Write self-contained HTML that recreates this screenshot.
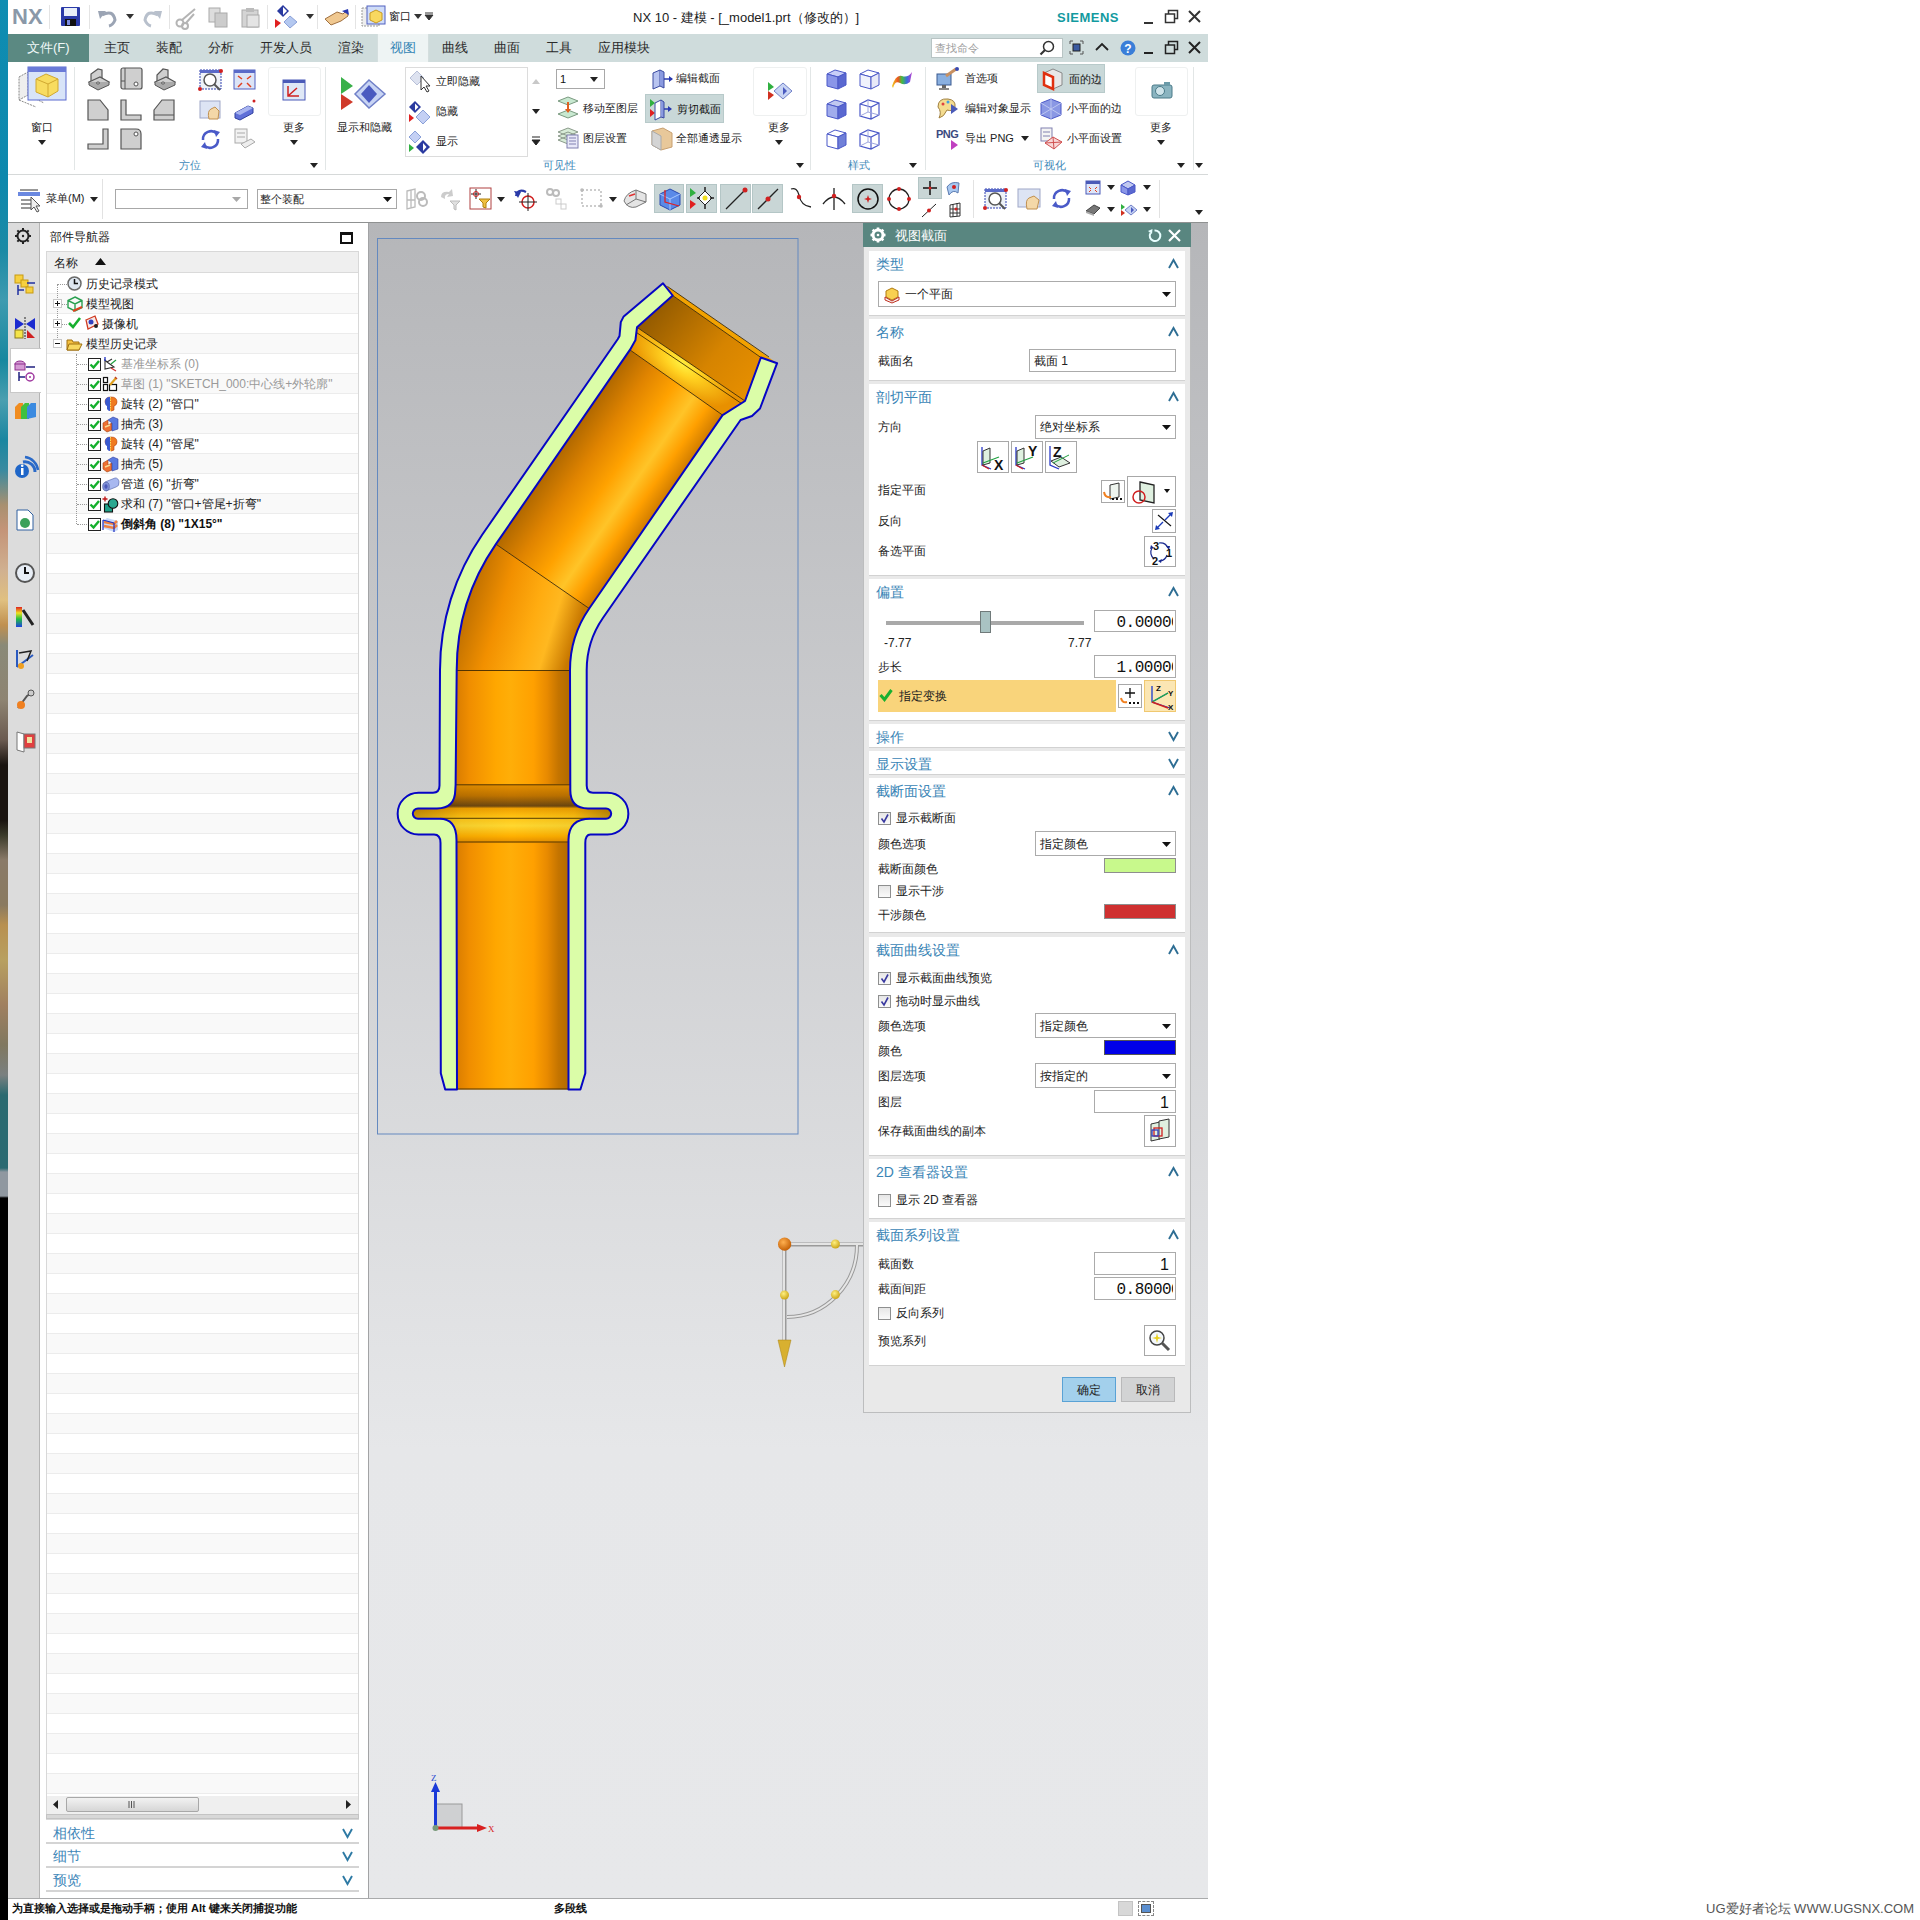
<!DOCTYPE html>
<html><head><meta charset="utf-8"><title>NX 10</title>
<style>
*{margin:0;padding:0;box-sizing:border-box}
html,body{width:1920px;height:1920px;overflow:hidden;background:#fff}
body{position:relative;font-family:"Liberation Sans",sans-serif;font-size:12px;color:#1e1e1e;line-height:1}
.a{position:absolute;white-space:nowrap}
.c{font-size:1.22em;letter-spacing:.07em}
svg.a{overflow:visible}
</style></head><body>

<div class="a" style="left:0px;top:0px;width:8px;height:1920px;background:linear-gradient(#0f8db2 0px,#0d88ad 180px,#1b8aa5 250px,#3f9bb0 300px,#17889f 360px,#4a9fb0 400px,#1a86a0 440px,#3a8aa0 470px,#a89070 505px,#c49478 530px,#d0b090 570px,#e0c080 600px,#c09050 625px,#8a8a78 645px,#8e8472 700px,#6a5a50 740px,#1a1410 765px,#1a1410 820px,#3a3a2a 835px,#8a7a68 860px,#8a7a60 905px,#b89050 925px,#b8a060 960px,#a08060 1005px,#807860 1045px,#7a8080 1075px,#2a6a70 1095px,#2a6a72 1168px,#9098a0 1172px,#9098a0 1196px,#000 1198px,#000 1920px)"></div>
<div class="a" style="left:8px;top:0px;width:1200px;height:34px;background:#fff"></div>
<div class="a" style="left:8px;top:34px;width:1200px;height:28px;background:#cfdcdc"></div>
<div class="a" style="left:8px;top:62px;width:1200px;height:112px;background:#fff"></div>
<div class="a" style="left:8px;top:174px;width:1200px;height:1px;background:#d6d9d9"></div>
<div class="a" style="left:8px;top:175px;width:1200px;height:47px;background:#fff"></div>
<div class="a" style="left:8px;top:222px;width:1200px;height:1px;background:#8f9191"></div>
<div class="a" style="left:8px;top:223px;width:32px;height:1675px;background:#dcdcdc;border-right:1px solid #b4b4b4"></div>
<div class="a" style="left:41px;top:223px;width:327px;height:1675px;background:#fff"></div>
<div class="a" style="left:368px;top:223px;width:840px;height:1675px;background:linear-gradient(#b5b6b9 0px,#e6e7e9 1227px,#e7e8ea 1675px);border-left:1px solid #a2a3a5"></div>
<div class="a" style="left:8px;top:1898px;width:1200px;height:1px;background:#a9aaab"></div>
<div class="a" style="left:8px;top:1899px;width:1200px;height:21px;background:#fff"></div>
<div class="a" style="left:12px;top:1902.5px;font-size:11px;color:#111;font-weight:bold"><span class="c">为直接输入选择或是拖动手柄；使用</span> Alt <span class="c">键来关闭捕捉功能</span></div>
<div class="a" style="left:554px;top:1902.5px;font-size:11px;color:#111;font-weight:bold"><span class="c">多段线</span></div>
<div class="a" style="left:1118px;top:1901px;width:15px;height:15px;background:#d8d8d8;border:1px solid #c4c4c4"></div>
<div class="a" style="left:1138px;top:1901px;width:16px;height:15px;border:1px dashed #888"></div>
<div class="a" style="left:1141px;top:1904px;width:10px;height:9px;background:#5b8fd0;border:1px solid #555"></div>
<div class="a" style="left:1706px;top:1901.5px;font-size:13px;color:#555;font-family:"Liberation Mono",monospace;letter-spacing:-0.5px">UG<span class="c">爱好者论坛</span> WWW.UGSNX.COM</div>
<div class="a" style="left:10px;top:348px;width:31px;height:45px;background:#fff;border:1px solid #c8c8c8;border-right:none"></div>
<svg class="a" style="left:14px;top:227px;" width="18" height="18" viewBox="0 0 18 18"><circle cx="9" cy="9" r="5.5" fill="none" stroke="#222" stroke-width="2"/><circle cx="9" cy="9" r="1.2" fill="#222"/><rect x="8" y="1" width="2" height="3" fill="#222" transform="rotate(0 9 9)"/><rect x="8" y="1" width="2" height="3" fill="#222" transform="rotate(45 9 9)"/><rect x="8" y="1" width="2" height="3" fill="#222" transform="rotate(90 9 9)"/><rect x="8" y="1" width="2" height="3" fill="#222" transform="rotate(135 9 9)"/><rect x="8" y="1" width="2" height="3" fill="#222" transform="rotate(180 9 9)"/><rect x="8" y="1" width="2" height="3" fill="#222" transform="rotate(225 9 9)"/><rect x="8" y="1" width="2" height="3" fill="#222" transform="rotate(270 9 9)"/><rect x="8" y="1" width="2" height="3" fill="#222" transform="rotate(315 9 9)"/></svg>
<svg width="0" height="0" style="position:absolute"><defs><linearGradient id="rb" x1="0" y1="0" x2="0" y2="1"><stop offset="0" stop-color="#e02020"/><stop offset="0.3" stop-color="#f0e020"/><stop offset="0.6" stop-color="#20c040"/><stop offset="1" stop-color="#2040e0"/></linearGradient></defs></svg>
<svg class="a" style="left:13px;top:273px;" width="24" height="24" viewBox="0 0 24 24"><rect x="2" y="2" width="8" height="8" fill="#f6d040" stroke="#c89a10"/><rect x="8" y="7" width="7" height="7" fill="#f6d040" stroke="#c89a10"/><rect x="13" y="14" width="7" height="6" fill="#f6d040" stroke="#c89a10"/><path d="M5 12 V22 M5 17 H11 M14 10 H22" stroke="#2030a0" stroke-width="1.5"/></svg>
<svg class="a" style="left:13px;top:315px;" width="24" height="24" viewBox="0 0 24 24"><path d="M2 3 L11 9 L2 15 Z M22 3 L13 9 L22 15 Z" fill="#1b2bd0"/><rect x="2" y="15" width="8" height="8" fill="#f4e44a" stroke="#8a7a20"/><path d="M14 23 L22 23 L14 15 Z" fill="#d02020"/><path d="M12 2 V24" stroke="#222" stroke-dasharray="2 1"/></svg>
<svg class="a" style="left:13px;top:359px;" width="24" height="24" viewBox="0 0 24 24"><ellipse cx="7" cy="5" rx="5" ry="3" fill="#d49ad4" stroke="#903090"/><rect x="2" y="5" width="10" height="6" fill="#d49ad4" stroke="#903090"/><path d="M6 13 V22 M6 18 H12 M13 8 H22" stroke="#202080" stroke-width="1.5"/><circle cx="17" cy="18" r="4" fill="none" stroke="#a03aa0" stroke-width="1.5"/><circle cx="17" cy="18" r="1" fill="#a03aa0"/></svg>
<svg class="a" style="left:13px;top:399px;" width="24" height="24" viewBox="0 0 24 24"><path d="M2 8 L6 4 L10 4 L10 20 L2 20 Z" fill="#f08c20"/><path d="M8 8 L12 4 L16 4 L16 20 L8 20 Z" fill="#40c040"/><path d="M14 8 L18 4 L23 4 L23 18 L14 20 Z" fill="#3a8ae0"/></svg>
<svg class="a" style="left:13px;top:454px;" width="24" height="24" viewBox="0 0 24 24"><path d="M10 8 A10 10 0 0 1 22 18" stroke="#2a6ac8" stroke-width="3" fill="none"/><path d="M12 3 A15 15 0 0 1 25 16" stroke="#2a6ac8" stroke-width="2.5" fill="none"/><circle cx="9" cy="17" r="7" fill="#1f66c8"/><rect x="8" y="14" width="2.5" height="7" fill="#fff"/><circle cx="9.2" cy="11.8" r="1.3" fill="#fff"/></svg>
<svg class="a" style="left:13px;top:508px;" width="24" height="24" viewBox="0 0 24 24"><path d="M4 2 H15 L20 7 V22 H4 Z" fill="#fff" stroke="#3060a0"/><circle cx="12" cy="15" r="5" fill="#3aa05a"/></svg>
<svg class="a" style="left:13px;top:561px;" width="24" height="24" viewBox="0 0 24 24"><circle cx="12" cy="12" r="9" fill="#e8eef6" stroke="#555" stroke-width="2"/><path d="M12 6 V12 H16" stroke="#111" stroke-width="2" fill="none"/></svg>
<svg class="a" style="left:13px;top:605px;" width="24" height="24" viewBox="0 0 24 24"><rect x="3" y="2" width="6" height="20" fill="url(#rb)"/><path d="M10 5 L20 20" stroke="#222" stroke-width="3"/></svg>
<svg class="a" style="left:13px;top:647px;" width="24" height="24" viewBox="0 0 24 24"><path d="M4 3 V20 M4 20 L20 8" stroke="#2a5ac0" stroke-width="2"/><path d="M6 6 L18 4 L14 14" fill="none" stroke="#222" stroke-width="1.5"/><circle cx="8" cy="19" r="3" fill="#f0a020"/></svg>
<svg class="a" style="left:13px;top:688px;" width="24" height="24" viewBox="0 0 24 24"><path d="M5 20 L14 8 L20 4" stroke="#555" stroke-width="2" fill="none"/><circle cx="18" cy="5" r="3" fill="#ccc" stroke="#555"/><circle cx="8" cy="17" r="4" fill="#f08020"/></svg>
<svg class="a" style="left:13px;top:729px;" width="24" height="24" viewBox="0 0 24 24"><path d="M4 3 V21 L11 23 V5 Z" fill="#fff" stroke="#777"/><rect x="11" y="5" width="11" height="14" fill="#e04040" stroke="#777"/><rect x="14" y="8" width="5" height="6" fill="#f0e0a0"/></svg>
<div class="a" style="left:50px;top:231.0px;font-size:12px;color:#222;"><span class="c">部件导航器</span></div>
<div class="a" style="left:340px;top:232px;width:13px;height:12px;border:2px solid #111;border-top-width:3px"></div>
<div class="a" style="left:46px;top:251px;width:313px;height:1569px;border:1px solid #d8d8d8;background:#fff"></div>
<div class="a" style="left:47px;top:252px;width:311px;height:21px;background:#efefef;border-bottom:1px solid #dadada"></div>
<div class="a" style="left:54px;top:257.0px;font-size:12px;color:#222;"><span class="c">名称</span></div>
<svg class="a" style="left:95px;top:258px;" width="11" height="7" viewBox="0 0 11 7"><path d="M0 7 L5.5 0 L11 7 Z" fill="#111"/></svg>
<div class="a" style="left:47px;top:274px;width:311px;height:20px;background:#ffffff;border-bottom:1px solid #ececec"></div>
<div class="a" style="left:47px;top:294px;width:311px;height:20px;background:#f9f9f9;border-bottom:1px solid #ececec"></div>
<div class="a" style="left:47px;top:314px;width:311px;height:20px;background:#ffffff;border-bottom:1px solid #ececec"></div>
<div class="a" style="left:47px;top:334px;width:311px;height:20px;background:#f9f9f9;border-bottom:1px solid #ececec"></div>
<div class="a" style="left:47px;top:354px;width:311px;height:20px;background:#ffffff;border-bottom:1px solid #ececec"></div>
<div class="a" style="left:47px;top:374px;width:311px;height:20px;background:#f9f9f9;border-bottom:1px solid #ececec"></div>
<div class="a" style="left:47px;top:394px;width:311px;height:20px;background:#ffffff;border-bottom:1px solid #ececec"></div>
<div class="a" style="left:47px;top:414px;width:311px;height:20px;background:#f9f9f9;border-bottom:1px solid #ececec"></div>
<div class="a" style="left:47px;top:434px;width:311px;height:20px;background:#ffffff;border-bottom:1px solid #ececec"></div>
<div class="a" style="left:47px;top:454px;width:311px;height:20px;background:#f9f9f9;border-bottom:1px solid #ececec"></div>
<div class="a" style="left:47px;top:474px;width:311px;height:20px;background:#ffffff;border-bottom:1px solid #ececec"></div>
<div class="a" style="left:47px;top:494px;width:311px;height:20px;background:#f9f9f9;border-bottom:1px solid #ececec"></div>
<div class="a" style="left:47px;top:514px;width:311px;height:20px;background:#ffffff;border-bottom:1px solid #ececec"></div>
<div class="a" style="left:47px;top:534px;width:311px;height:20px;background:#f9f9f9;border-bottom:1px solid #ececec"></div>
<div class="a" style="left:47px;top:554px;width:311px;height:20px;background:#ffffff;border-bottom:1px solid #ececec"></div>
<div class="a" style="left:47px;top:574px;width:311px;height:20px;background:#f9f9f9;border-bottom:1px solid #ececec"></div>
<div class="a" style="left:47px;top:594px;width:311px;height:20px;background:#ffffff;border-bottom:1px solid #ececec"></div>
<div class="a" style="left:47px;top:614px;width:311px;height:20px;background:#f9f9f9;border-bottom:1px solid #ececec"></div>
<div class="a" style="left:47px;top:634px;width:311px;height:20px;background:#ffffff;border-bottom:1px solid #ececec"></div>
<div class="a" style="left:47px;top:654px;width:311px;height:20px;background:#f9f9f9;border-bottom:1px solid #ececec"></div>
<div class="a" style="left:47px;top:674px;width:311px;height:20px;background:#ffffff;border-bottom:1px solid #ececec"></div>
<div class="a" style="left:47px;top:694px;width:311px;height:20px;background:#f9f9f9;border-bottom:1px solid #ececec"></div>
<div class="a" style="left:47px;top:714px;width:311px;height:20px;background:#ffffff;border-bottom:1px solid #ececec"></div>
<div class="a" style="left:47px;top:734px;width:311px;height:20px;background:#f9f9f9;border-bottom:1px solid #ececec"></div>
<div class="a" style="left:47px;top:754px;width:311px;height:20px;background:#ffffff;border-bottom:1px solid #ececec"></div>
<div class="a" style="left:47px;top:774px;width:311px;height:20px;background:#f9f9f9;border-bottom:1px solid #ececec"></div>
<div class="a" style="left:47px;top:794px;width:311px;height:20px;background:#ffffff;border-bottom:1px solid #ececec"></div>
<div class="a" style="left:47px;top:814px;width:311px;height:20px;background:#f9f9f9;border-bottom:1px solid #ececec"></div>
<div class="a" style="left:47px;top:834px;width:311px;height:20px;background:#ffffff;border-bottom:1px solid #ececec"></div>
<div class="a" style="left:47px;top:854px;width:311px;height:20px;background:#f9f9f9;border-bottom:1px solid #ececec"></div>
<div class="a" style="left:47px;top:874px;width:311px;height:20px;background:#ffffff;border-bottom:1px solid #ececec"></div>
<div class="a" style="left:47px;top:894px;width:311px;height:20px;background:#f9f9f9;border-bottom:1px solid #ececec"></div>
<div class="a" style="left:47px;top:914px;width:311px;height:20px;background:#ffffff;border-bottom:1px solid #ececec"></div>
<div class="a" style="left:47px;top:934px;width:311px;height:20px;background:#f9f9f9;border-bottom:1px solid #ececec"></div>
<div class="a" style="left:47px;top:954px;width:311px;height:20px;background:#ffffff;border-bottom:1px solid #ececec"></div>
<div class="a" style="left:47px;top:974px;width:311px;height:20px;background:#f9f9f9;border-bottom:1px solid #ececec"></div>
<div class="a" style="left:47px;top:994px;width:311px;height:20px;background:#ffffff;border-bottom:1px solid #ececec"></div>
<div class="a" style="left:47px;top:1014px;width:311px;height:20px;background:#f9f9f9;border-bottom:1px solid #ececec"></div>
<div class="a" style="left:47px;top:1034px;width:311px;height:20px;background:#ffffff;border-bottom:1px solid #ececec"></div>
<div class="a" style="left:47px;top:1054px;width:311px;height:20px;background:#f9f9f9;border-bottom:1px solid #ececec"></div>
<div class="a" style="left:47px;top:1074px;width:311px;height:20px;background:#ffffff;border-bottom:1px solid #ececec"></div>
<div class="a" style="left:47px;top:1094px;width:311px;height:20px;background:#f9f9f9;border-bottom:1px solid #ececec"></div>
<div class="a" style="left:47px;top:1114px;width:311px;height:20px;background:#ffffff;border-bottom:1px solid #ececec"></div>
<div class="a" style="left:47px;top:1134px;width:311px;height:20px;background:#f9f9f9;border-bottom:1px solid #ececec"></div>
<div class="a" style="left:47px;top:1154px;width:311px;height:20px;background:#ffffff;border-bottom:1px solid #ececec"></div>
<div class="a" style="left:47px;top:1174px;width:311px;height:20px;background:#f9f9f9;border-bottom:1px solid #ececec"></div>
<div class="a" style="left:47px;top:1194px;width:311px;height:20px;background:#ffffff;border-bottom:1px solid #ececec"></div>
<div class="a" style="left:47px;top:1214px;width:311px;height:20px;background:#f9f9f9;border-bottom:1px solid #ececec"></div>
<div class="a" style="left:47px;top:1234px;width:311px;height:20px;background:#ffffff;border-bottom:1px solid #ececec"></div>
<div class="a" style="left:47px;top:1254px;width:311px;height:20px;background:#f9f9f9;border-bottom:1px solid #ececec"></div>
<div class="a" style="left:47px;top:1274px;width:311px;height:20px;background:#ffffff;border-bottom:1px solid #ececec"></div>
<div class="a" style="left:47px;top:1294px;width:311px;height:20px;background:#f9f9f9;border-bottom:1px solid #ececec"></div>
<div class="a" style="left:47px;top:1314px;width:311px;height:20px;background:#ffffff;border-bottom:1px solid #ececec"></div>
<div class="a" style="left:47px;top:1334px;width:311px;height:20px;background:#f9f9f9;border-bottom:1px solid #ececec"></div>
<div class="a" style="left:47px;top:1354px;width:311px;height:20px;background:#ffffff;border-bottom:1px solid #ececec"></div>
<div class="a" style="left:47px;top:1374px;width:311px;height:20px;background:#f9f9f9;border-bottom:1px solid #ececec"></div>
<div class="a" style="left:47px;top:1394px;width:311px;height:20px;background:#ffffff;border-bottom:1px solid #ececec"></div>
<div class="a" style="left:47px;top:1414px;width:311px;height:20px;background:#f9f9f9;border-bottom:1px solid #ececec"></div>
<div class="a" style="left:47px;top:1434px;width:311px;height:20px;background:#ffffff;border-bottom:1px solid #ececec"></div>
<div class="a" style="left:47px;top:1454px;width:311px;height:20px;background:#f9f9f9;border-bottom:1px solid #ececec"></div>
<div class="a" style="left:47px;top:1474px;width:311px;height:20px;background:#ffffff;border-bottom:1px solid #ececec"></div>
<div class="a" style="left:47px;top:1494px;width:311px;height:20px;background:#f9f9f9;border-bottom:1px solid #ececec"></div>
<div class="a" style="left:47px;top:1514px;width:311px;height:20px;background:#ffffff;border-bottom:1px solid #ececec"></div>
<div class="a" style="left:47px;top:1534px;width:311px;height:20px;background:#f9f9f9;border-bottom:1px solid #ececec"></div>
<div class="a" style="left:47px;top:1554px;width:311px;height:20px;background:#ffffff;border-bottom:1px solid #ececec"></div>
<div class="a" style="left:47px;top:1574px;width:311px;height:20px;background:#f9f9f9;border-bottom:1px solid #ececec"></div>
<div class="a" style="left:47px;top:1594px;width:311px;height:20px;background:#ffffff;border-bottom:1px solid #ececec"></div>
<div class="a" style="left:47px;top:1614px;width:311px;height:20px;background:#f9f9f9;border-bottom:1px solid #ececec"></div>
<div class="a" style="left:47px;top:1634px;width:311px;height:20px;background:#ffffff;border-bottom:1px solid #ececec"></div>
<div class="a" style="left:47px;top:1654px;width:311px;height:20px;background:#f9f9f9;border-bottom:1px solid #ececec"></div>
<div class="a" style="left:47px;top:1674px;width:311px;height:20px;background:#ffffff;border-bottom:1px solid #ececec"></div>
<div class="a" style="left:47px;top:1694px;width:311px;height:20px;background:#f9f9f9;border-bottom:1px solid #ececec"></div>
<div class="a" style="left:47px;top:1714px;width:311px;height:20px;background:#ffffff;border-bottom:1px solid #ececec"></div>
<div class="a" style="left:47px;top:1734px;width:311px;height:20px;background:#f9f9f9;border-bottom:1px solid #ececec"></div>
<div class="a" style="left:47px;top:1754px;width:311px;height:20px;background:#ffffff;border-bottom:1px solid #ececec"></div>
<div class="a" style="left:47px;top:1774px;width:311px;height:20px;background:#f9f9f9;border-bottom:1px solid #ececec"></div>
<div class="a" style="left:57px;top:284px;width:1px;height:60px;border-left:1px dotted #999"></div>
<div class="a" style="left:58px;top:284px;width:9px;height:1px;border-top:1px dotted #999"></div>
<div class="a" style="left:62px;top:304px;width:5px;height:1px;border-top:1px dotted #999"></div>
<div class="a" style="left:62px;top:324px;width:5px;height:1px;border-top:1px dotted #999"></div>
<div class="a" style="left:76px;top:354px;width:1px;height:170px;border-left:1px dotted #999"></div>
<div class="a" style="left:77px;top:364px;width:10px;height:1px;border-top:1px dotted #999"></div>
<div class="a" style="left:77px;top:384px;width:10px;height:1px;border-top:1px dotted #999"></div>
<div class="a" style="left:77px;top:404px;width:10px;height:1px;border-top:1px dotted #999"></div>
<div class="a" style="left:77px;top:424px;width:10px;height:1px;border-top:1px dotted #999"></div>
<div class="a" style="left:77px;top:444px;width:10px;height:1px;border-top:1px dotted #999"></div>
<div class="a" style="left:77px;top:464px;width:10px;height:1px;border-top:1px dotted #999"></div>
<div class="a" style="left:77px;top:484px;width:10px;height:1px;border-top:1px dotted #999"></div>
<div class="a" style="left:77px;top:504px;width:10px;height:1px;border-top:1px dotted #999"></div>
<div class="a" style="left:77px;top:524px;width:10px;height:1px;border-top:1px dotted #999"></div>
<div class="a" style="left:53px;top:299px;width:9px;height:9px;border:1px solid #c8c8c8;background:#fff"></div>
<div class="a" style="left:55px;top:303px;width:5px;height:1px;background:#111"></div>
<div class="a" style="left:57px;top:301px;width:1px;height:5px;background:#111"></div>
<div class="a" style="left:53px;top:319px;width:9px;height:9px;border:1px solid #c8c8c8;background:#fff"></div>
<div class="a" style="left:55px;top:323px;width:5px;height:1px;background:#111"></div>
<div class="a" style="left:57px;top:321px;width:1px;height:5px;background:#111"></div>
<div class="a" style="left:53px;top:339px;width:9px;height:9px;border:1px solid #c8c8c8;background:#fff"></div>
<div class="a" style="left:55px;top:343px;width:5px;height:1px;background:#111"></div>
<svg class="a" style="left:67px;top:276px;" width="15" height="15" viewBox="0 0 15 15"><circle cx="7.5" cy="7.5" r="6.5" fill="#dde6f0" stroke="#6a6a6a" stroke-width="1.5"/><path d="M7.5 3 V7.5 H11" stroke="#111" stroke-width="1.5" fill="none"/></svg>
<div class="a" style="left:86px;top:278.0px;font-size:12px;color:#222;"><span class="c">历史记录模式</span></div>
<svg class="a" style="left:67px;top:296px;" width="16" height="16" viewBox="0 0 16 16"><path d="M8 1 L15 4.5 V11.5 L8 15 L1 11.5 V4.5 Z M1 4.5 L8 8 L15 4.5 M8 8 V15" fill="none" stroke="#2aa050" stroke-width="1.4"/><path d="M6 15 L15 11" stroke="#e04020" stroke-width="2"/></svg>
<div class="a" style="left:86px;top:298.0px;font-size:12px;color:#222;"><span class="c">模型视图</span></div>
<svg class="a" style="left:68px;top:317px;" width="13" height="12" viewBox="0 0 13 12"><path d="M1 6 L5 10 L12 1" fill="none" stroke="#18b030" stroke-width="2.6"/></svg>
<svg class="a" style="left:84px;top:315px;" width="15" height="15" viewBox="0 0 15 15"><path d="M2 5 L11 1 L14 9 L4 14 Z" fill="#f6e8e8" stroke="#d03a20" stroke-width="1.3"/><circle cx="7" cy="7" r="2.5" fill="#3040c0"/><circle cx="12" cy="11" r="2" fill="#222"/></svg>
<div class="a" style="left:102px;top:318.0px;font-size:12px;color:#222;"><span class="c">摄像机</span></div>
<svg class="a" style="left:66px;top:337px;" width="17" height="14" viewBox="0 0 17 14"><path d="M1 3 H6 L7 5 H13 V13 H1 Z" fill="#f4c040" stroke="#a07010"/><path d="M3 7 H16 L13 13 H1 Z" fill="#f8d860" stroke="#a07010"/></svg>
<div class="a" style="left:86px;top:338.0px;font-size:12px;color:#222;"><span class="c">模型历史记录</span></div>
<div class="a" style="left:88px;top:358px;width:13px;height:13px;border:1px solid #222;background:#fff"></div>
<svg class="a" style="left:89px;top:359px;" width="11" height="11" viewBox="0 0 11 11"><path d="M1.5 5.5 L4.5 8.5 L10 2" fill="none" stroke="#14b02c" stroke-width="2.4"/></svg>
<svg class="a" style="left:102px;top:356px;" width="16" height="16" viewBox="0 0 16 16"><path d="M3 4 V13 L12 11 L5 6 Z M5 6 L10 3" fill="none" stroke="#333" stroke-width="1.1"/><path d="M3 5 V1" stroke="#2030c0" stroke-width="1.3"/><path d="M9 8 L14 4" stroke="#20a040" stroke-width="1.3"/><path d="M9 12 L14 15" stroke="#d03030" stroke-width="1.3"/></svg>
<div class="a" style="left:121px;top:358.0px;font-size:12px;color:#9a9a9a;"><span class="c">基准坐标系</span> (0)</div>
<div class="a" style="left:88px;top:378px;width:13px;height:13px;border:1px solid #222;background:#fff"></div>
<svg class="a" style="left:89px;top:379px;" width="11" height="11" viewBox="0 0 11 11"><path d="M1.5 5.5 L4.5 8.5 L10 2" fill="none" stroke="#14b02c" stroke-width="2.4"/></svg>
<svg class="a" style="left:102px;top:376px;" width="16" height="16" viewBox="0 0 16 16"><rect x="1.5" y="1.5" width="4" height="5" fill="#fff" stroke="#111" stroke-width="1.2"/><rect x="1.5" y="8.5" width="4" height="6" fill="#fff" stroke="#111" stroke-width="1.2"/><rect x="7.5" y="8.5" width="7" height="6" fill="#fff" stroke="#111" stroke-width="1.2"/><path d="M8 9 L14 2" stroke="#e0a020" stroke-width="2.2"/><path d="M13 1 L15 3" stroke="#c04020" stroke-width="1.5"/></svg>
<div class="a" style="left:121px;top:378.0px;font-size:12px;color:#9a9a9a;"><span class="c">草图</span> (1) "SKETCH_000:<span class="c">中心线</span>+<span class="c">外轮廓</span>"</div>
<div class="a" style="left:88px;top:398px;width:13px;height:13px;border:1px solid #222;background:#fff"></div>
<svg class="a" style="left:89px;top:399px;" width="11" height="11" viewBox="0 0 11 11"><path d="M1.5 5.5 L4.5 8.5 L10 2" fill="none" stroke="#14b02c" stroke-width="2.4"/></svg>
<svg class="a" style="left:102px;top:396px;" width="16" height="16" viewBox="0 0 16 16"><path d="M3 6 Q3 1 9 1 Q15 1 15 6 Q15 9 12 10 V14 Q9 16 7 14 V10 Q3 9 3 6 Z" fill="#f07a20" stroke="#b04010" stroke-width="0.6"/><path d="M3 6 Q3 1 8 1 V15 Q6 15 5 13 V10 Q3 9 3 6 Z" fill="#3a5ad0"/><path d="M8.5 1 V15" stroke="#f8e060" stroke-width="1" stroke-dasharray="1.5 1"/></svg>
<div class="a" style="left:121px;top:398.0px;font-size:12px;color:#222;"><span class="c">旋转</span> (2) "<span class="c">管口</span>"</div>
<div class="a" style="left:88px;top:418px;width:13px;height:13px;border:1px solid #222;background:#fff"></div>
<svg class="a" style="left:89px;top:419px;" width="11" height="11" viewBox="0 0 11 11"><path d="M1.5 5.5 L4.5 8.5 L10 2" fill="none" stroke="#14b02c" stroke-width="2.4"/></svg>
<svg class="a" style="left:102px;top:416px;" width="16" height="16" viewBox="0 0 16 16"><path d="M1 7 L6 4 V9 L10 7 V14 L5 16 L1 13 Z" fill="#f07030" stroke="#a04010" stroke-width="0.6"/><path d="M6 4 L11 1 L16 3 V13 L10 15 V7 Z" fill="#5a7ae0" stroke="#3040a0" stroke-width="0.6"/><path d="M3 11 L8 9" stroke="#f8d890" stroke-width="1.5"/></svg>
<div class="a" style="left:121px;top:418.0px;font-size:12px;color:#222;"><span class="c">抽壳</span> (3)</div>
<div class="a" style="left:88px;top:438px;width:13px;height:13px;border:1px solid #222;background:#fff"></div>
<svg class="a" style="left:89px;top:439px;" width="11" height="11" viewBox="0 0 11 11"><path d="M1.5 5.5 L4.5 8.5 L10 2" fill="none" stroke="#14b02c" stroke-width="2.4"/></svg>
<svg class="a" style="left:102px;top:436px;" width="16" height="16" viewBox="0 0 16 16"><path d="M3 6 Q3 1 9 1 Q15 1 15 6 Q15 9 12 10 V14 Q9 16 7 14 V10 Q3 9 3 6 Z" fill="#f07a20" stroke="#b04010" stroke-width="0.6"/><path d="M3 6 Q3 1 8 1 V15 Q6 15 5 13 V10 Q3 9 3 6 Z" fill="#3a5ad0"/><path d="M8.5 1 V15" stroke="#f8e060" stroke-width="1" stroke-dasharray="1.5 1"/></svg>
<div class="a" style="left:121px;top:438.0px;font-size:12px;color:#222;"><span class="c">旋转</span> (4) "<span class="c">管尾</span>"</div>
<div class="a" style="left:88px;top:458px;width:13px;height:13px;border:1px solid #222;background:#fff"></div>
<svg class="a" style="left:89px;top:459px;" width="11" height="11" viewBox="0 0 11 11"><path d="M1.5 5.5 L4.5 8.5 L10 2" fill="none" stroke="#14b02c" stroke-width="2.4"/></svg>
<svg class="a" style="left:102px;top:456px;" width="16" height="16" viewBox="0 0 16 16"><path d="M1 7 L6 4 V9 L10 7 V14 L5 16 L1 13 Z" fill="#f07030" stroke="#a04010" stroke-width="0.6"/><path d="M6 4 L11 1 L16 3 V13 L10 15 V7 Z" fill="#5a7ae0" stroke="#3040a0" stroke-width="0.6"/><path d="M3 11 L8 9" stroke="#f8d890" stroke-width="1.5"/></svg>
<div class="a" style="left:121px;top:458.0px;font-size:12px;color:#222;"><span class="c">抽壳</span> (5)</div>
<div class="a" style="left:88px;top:478px;width:13px;height:13px;border:1px solid #222;background:#fff"></div>
<svg class="a" style="left:89px;top:479px;" width="11" height="11" viewBox="0 0 11 11"><path d="M1.5 5.5 L4.5 8.5 L10 2" fill="none" stroke="#14b02c" stroke-width="2.4"/></svg>
<svg class="a" style="left:102px;top:476px;" width="16" height="16" viewBox="0 0 16 16"><path d="M3 6 L13 2 A3.5 4.5 0 0 1 14 11 L4 15 Z" fill="#a8b8f0" stroke="#6070b0" stroke-width="0.7"/><ellipse cx="4" cy="10.5" rx="3.3" ry="4.3" fill="#8090d8" stroke="#5060a0" stroke-width="0.7"/><ellipse cx="4" cy="10.5" rx="1.6" ry="2.2" fill="#4a58b8"/></svg>
<div class="a" style="left:121px;top:478.0px;font-size:12px;color:#222;"><span class="c">管道</span> (6) "<span class="c">折弯</span>"</div>
<div class="a" style="left:88px;top:498px;width:13px;height:13px;border:1px solid #222;background:#fff"></div>
<svg class="a" style="left:89px;top:499px;" width="11" height="11" viewBox="0 0 11 11"><path d="M1.5 5.5 L4.5 8.5 L10 2" fill="none" stroke="#14b02c" stroke-width="2.4"/></svg>
<svg class="a" style="left:102px;top:496px;" width="16" height="16" viewBox="0 0 16 16"><rect x="2.5" y="8" width="8" height="8" fill="#20a088" stroke="#111" stroke-width="1.1"/><circle cx="11" cy="7.5" r="4.8" fill="#2aa890" stroke="#111" stroke-width="1.1"/><path d="M0.5 3 H5.5 M3 0.5 V5.5" stroke="#c01818" stroke-width="1.4"/></svg>
<div class="a" style="left:121px;top:498.0px;font-size:12px;color:#222;"><span class="c">求和</span> (7) "<span class="c">管口</span>+<span class="c">管尾</span>+<span class="c">折弯</span>"</div>
<div class="a" style="left:88px;top:518px;width:13px;height:13px;border:1px solid #222;background:#fff"></div>
<svg class="a" style="left:89px;top:519px;" width="11" height="11" viewBox="0 0 11 11"><path d="M1.5 5.5 L4.5 8.5 L10 2" fill="none" stroke="#14b02c" stroke-width="2.4"/></svg>
<svg class="a" style="left:102px;top:516px;" width="16" height="16" viewBox="0 0 16 16"><path d="M1 5 L5 2 L16 5 V14 L12 16 L1 12 Z" fill="#c8d8f8"/><path d="M2 6 L12 8 L15 5 M2 10 L12 12 L15 9" stroke="#f08040" stroke-width="2.5" fill="none"/><path d="M1 4 V14 M12 7 V16 M1 4 L12 7" stroke="#2030c0" stroke-width="1.2" fill="none"/></svg>
<div class="a" style="left:121px;top:518.0px;font-size:12px;color:#111;font-weight:bold"><span class="c">倒斜角</span> (8) "1X15°"</div>
<div class="a" style="left:47px;top:1796px;width:311px;height:18px;background:#efefef"></div>
<svg class="a" style="left:53px;top:1800px;" width="6" height="9" viewBox="0 0 6 9"><path d="M5 0 V9 L0 4.5 Z" fill="#222"/></svg>
<svg class="a" style="left:346px;top:1800px;" width="6" height="9" viewBox="0 0 6 9"><path d="M0 0 V9 L5 4.5 Z" fill="#222"/></svg>
<div class="a" style="left:66px;top:1797px;width:133px;height:15px;background:linear-gradient(#f2f2f2,#d6d6d6);border:1px solid #a8a8a8;border-radius:2px"></div>
<svg class="a" style="left:128px;top:1801px;" width="7" height="7" viewBox="0 0 7 7"><path d="M1 0 V7 M3.5 0 V7 M6 0 V7" stroke="#555"/></svg>
<div class="a" style="left:46px;top:1814px;width:313px;height:5px;background:#d8d8d8;border:1px solid #c4c4c4"></div>
<div class="a" style="left:53px;top:1826.0px;font-size:14px;color:#3d86b8;"><span class="c">相依性</span></div>
<svg class="a" style="left:342px;top:1827.5px;" width="11" height="10" viewBox="0 0 11 10"><path d="M1 1 L5.5 9 L10 1" fill="none" stroke="#2e7aa4" stroke-width="1.9"/></svg>
<div class="a" style="left:46px;top:1842px;width:313px;height:2px;background:#d4d4d4"></div>
<div class="a" style="left:53px;top:1849.0px;font-size:14px;color:#3d86b8;"><span class="c">细节</span></div>
<svg class="a" style="left:342px;top:1850.5px;" width="11" height="10" viewBox="0 0 11 10"><path d="M1 1 L5.5 9 L10 1" fill="none" stroke="#2e7aa4" stroke-width="1.9"/></svg>
<div class="a" style="left:46px;top:1866px;width:313px;height:2px;background:#d4d4d4"></div>
<div class="a" style="left:53px;top:1873.0px;font-size:14px;color:#3d86b8;"><span class="c">预览</span></div>
<svg class="a" style="left:342px;top:1874.5px;" width="11" height="10" viewBox="0 0 11 10"><path d="M1 1 L5.5 9 L10 1" fill="none" stroke="#2e7aa4" stroke-width="1.9"/></svg>
<div class="a" style="left:46px;top:1890px;width:313px;height:2px;background:#d4d4d4"></div>
<!-- viewport graphics -->
<svg class="a" style="left:0;top:0" width="1920" height="1920" viewBox="0 0 1920 1920">
<defs>
<linearGradient id="gV" gradientUnits="userSpaceOnUse" x1="456" y1="0" x2="570" y2="0">
<stop offset="0" stop-color="#d97c00"/><stop offset="0.12" stop-color="#f08e00"/><stop offset="0.35" stop-color="#ffa700"/><stop offset="0.48" stop-color="#ffae08"/><stop offset="0.68" stop-color="#ffa000"/><stop offset="0.8" stop-color="#e88a00"/><stop offset="0.9" stop-color="#c47400"/><stop offset="1" stop-color="#b06a00"/>
</linearGradient>
<linearGradient id="gS" gradientUnits="userSpaceOnUse" x1="552.6" y1="461.8" x2="645.9" y2="526.2">
<stop offset="0" stop-color="#b06800"/><stop offset="0.25" stop-color="#e08400"/><stop offset="0.5" stop-color="#ffa200"/><stop offset="0.7" stop-color="#ffc428"/><stop offset="0.85" stop-color="#ffa000"/><stop offset="1" stop-color="#d07c00"/>
</linearGradient>
<linearGradient id="gB" gradientUnits="userSpaceOnUse" x1="466.7" y1="604.1" x2="574.9" y2="637.7">
<stop offset="0" stop-color="#c07000"/><stop offset="0.3" stop-color="#f29000"/><stop offset="0.6" stop-color="#ffac10"/><stop offset="0.78" stop-color="#ffb820"/><stop offset="1" stop-color="#c87800"/>
</linearGradient>
<linearGradient id="gM" gradientUnits="userSpaceOnUse" x1="650" y1="300" x2="760" y2="390">
<stop offset="0" stop-color="#8c5600"/><stop offset="0.6" stop-color="#d68400"/><stop offset="1" stop-color="#e89000"/>
</linearGradient>
<radialGradient id="gSt" gradientUnits="userSpaceOnUse" cx="682" cy="364" r="62" gradientTransform="translate(682 364) rotate(35) scale(1 0.45) translate(-682 -364)"><stop offset="0" stop-color="#fff040"/><stop offset="0.35" stop-color="#ffd020"/><stop offset="1" stop-color="#e89000"/></radialGradient>
<linearGradient id="gF" gradientUnits="userSpaceOnUse" x1="0" y1="784" x2="0" y2="842">
<stop offset="0" stop-color="#e99200"/><stop offset="0.2" stop-color="#c07400"/><stop offset="0.38" stop-color="#6e4810"/><stop offset="0.42" stop-color="#f0a000"/><stop offset="0.55" stop-color="#ffc010"/><stop offset="0.72" stop-color="#ffd830"/><stop offset="0.9" stop-color="#ffb000"/><stop offset="1" stop-color="#e89000"/>
</linearGradient>
<linearGradient id="gFs" gradientUnits="userSpaceOnUse" x1="410" y1="0" x2="615" y2="0">
<stop offset="0" stop-color="#000" stop-opacity="0.25"/><stop offset="0.25" stop-color="#000" stop-opacity="0.05"/><stop offset="0.5" stop-color="#000" stop-opacity="0"/><stop offset="0.8" stop-color="#000" stop-opacity="0.05"/><stop offset="1" stop-color="#000" stop-opacity="0.3"/>
</linearGradient>
</defs>
<rect x="377.5" y="238.5" width="420.5" height="895.5" fill="none" stroke="#6489bf" stroke-width="1"/>
<!-- orange surfaces -->
<rect x="454" y="842" width="117" height="247.5" fill="url(#gV)"/>
<rect x="454" y="670" width="118" height="115" fill="url(#gV)"/>
<path d="M455 784.3 L570.3 784.3 L570.3 790 Q570.3 808.4 588 808.4 L606 808.4 A5.2 5.2 0 0 1 606 818.8 L590.5 818.8 Q568.5 818.8 568.5 840 L568.5 842.5 L456.5 842.5 L456.5 840 Q456.5 818.8 439.5 818.8 L418 818.8 A5.2 5.2 0 0 1 418 808.4 L437 808.4 Q455 808.4 455.3 790 Z" fill="url(#gF)"/>
<path d="M455 784.3 L570.3 784.3 L570.3 790 Q570.3 808.4 588 808.4 L606 808.4 A5.2 5.2 0 0 1 606 818.8 L590.5 818.8 Q568.5 818.8 568.5 840 L568.5 842.5 L456.5 842.5 L456.5 840 Q456.5 818.8 439.5 818.8 L418 818.8 A5.2 5.2 0 0 1 418 808.4 L437 808.4 Q455 808.4 455.3 790 Z" fill="url(#gFs)"/>
<path d="M456.7 671 L572 671 L589.2 608.5 L495.9 544.15 A221.65 221.65 0 0 0 456.7 670 Z" fill="url(#gB)"/>
<path d="M495.9 544.15 L589.2 608.5 L722.6 415.1 L629.9 349.9 Z" fill="url(#gS)"/>
<path d="M629.9 349.9 L722.6 415.1 L745 401 L637 327.3 Z" fill="url(#gSt)"/>
<path d="M637 327.3 L745 401 L760.9 357.5 L672.7 295.5 Z" fill="url(#gM)"/>
<path d="M663 283.3 L777.1 363.2 L760.9 357.5 L672.7 295.5 Z" fill="#f2a200"/>
<g stroke="#3a2600" stroke-width="1" fill="none" opacity="0.85">
<path d="M456 670.5 H570"/><path d="M457 1089 H568.5"/><path d="M455 784.8 H570"/><path d="M440 818.3 H590"/><path d="M457 842 H568"/>
<path d="M495.9 544.15 L589.2 608.5"/>
<path d="M629.9 349.9 L722.6 415.1"/>
<path d="M637 327.3 L745 401"/><path d="M635 331.5 L743 404.5"/>
<path d="M672.7 295.5 L760.9 357.5"/><path d="M667.5 286.5 L769 357"/>
</g>
<!-- walls -->
<g fill="#dbfda8" stroke="#0606c4" stroke-width="2" stroke-linejoin="round">
<path d="M445.2 1089.5 L457 1089.5 L456.5 840 Q456.5 818.8 439.5 818.8 L418 818.8 A5.2 5.2 0 0 1 418 808.4 L437 808.4 Q455 808.4 455.3 790 L455.6 785 L456.7 670 A221.65 221.65 0 0 1 495.9 544.15 L629.9 349.9 L635.4 340.3 L637 327.3 L672.7 295.5 L663 283.3 L623.7 316.4 L620.8 322.1 L619.5 336.1 L617.7 339.3 L482.2 534.7 A238.35 238.35 0 0 0 440 670 L439.5 785.6 Q439.5 792.8 433 792.8 L418.5 792.8 A20.85 20.85 0 0 0 418.5 834.5 L434 834.5 Q440.5 834.5 440.5 843 L440.8 1073.2 Z"/>
<path d="M580.4 1089.5 L568.5 1089.5 L568.5 840 Q568.5 818.8 590.5 818.8 L606 818.8 A5.2 5.2 0 0 0 606 808.4 L588 808.4 Q570.3 808.4 570.3 790 L570.3 785 L570 670 A108.35 108.35 0 0 1 589.2 608.5 L722.6 415.1 L745 401 L760.9 357.5 L777.1 363.2 L760 408.5 L752 416 L740.6 420 L602.9 618 A91.65 91.65 0 0 0 586.7 670 L586.7 785.6 Q586.7 792.8 593 792.8 L607.5 792.8 A20.85 20.85 0 0 1 607.5 834.5 L590.5 834.5 Q585.3 834.5 585.3 843 L585.3 1073.2 Z"/>
</g>
</svg>


<svg class="a" style="left:770px;top:1230px;" width="100" height="145" viewBox="0 0 100 145">
<defs>
<radialGradient id="ob" cx="0.4" cy="0.35" r="0.7"><stop offset="0" stop-color="#ffb050"/><stop offset="1" stop-color="#c05a00"/></radialGradient>
<radialGradient id="yb" cx="0.4" cy="0.35" r="0.7"><stop offset="0" stop-color="#fff080"/><stop offset="1" stop-color="#c8a010"/></radialGradient>
</defs>
<path d="M14.5 14.5 H93" stroke="#9a9a9a" stroke-width="4"/><path d="M14.5 14 H93" stroke="#e4e4e4" stroke-width="2"/>
<path d="M14.5 14.5 V112" stroke="#9a9a9a" stroke-width="4"/><path d="M14 14.5 V112" stroke="#e4e4e4" stroke-width="2"/>
<path d="M87 15 A70 72 0 0 1 17 87" fill="none" stroke="#9a9a9a" stroke-width="4"/><path d="M87 15 A70 72 0 0 1 17 87" fill="none" stroke="#e6e6e6" stroke-width="2"/>
<path d="M8 110 L21 110 L14.5 137 Z" fill="#d8b030" stroke="#a88010" stroke-width="0.5"/>
<circle cx="14.6" cy="14.2" r="6.6" fill="url(#ob)"/>
<circle cx="65.4" cy="14" r="4.5" fill="url(#yb)"/>
<circle cx="14.5" cy="65" r="4.5" fill="url(#yb)"/>
<circle cx="65.4" cy="64.6" r="4.5" fill="url(#yb)"/>
</svg>
<svg class="a" style="left:425px;top:1770px;" width="70" height="70" viewBox="0 0 70 70">
<rect x="11" y="34" width="26" height="24" fill="#cfd0d2" stroke="#9a9a9a"/>
<path d="M10.5 58 V18" stroke="#1a3ad8" stroke-width="3"/><path d="M6 22 L10.5 12 L15 22 Z" fill="#1a3ad8"/>
<path d="M10.5 58 H55" stroke="#d82020" stroke-width="3"/><path d="M52 54 L62 58 L52 62 Z" fill="#d82020"/>
<circle cx="10.5" cy="58" r="3" fill="#7a9a7a"/>
<text x="6" y="11" font-size="9" fill="#2a4ad0" font-family="Liberation Serif">Z</text>
<text x="63" y="62" font-size="9" fill="#d82020" font-family="Liberation Serif">X</text>
</svg>
<div class="a" style="left:863px;top:223px;width:328px;height:1190px;background:#e9e9e9;border:1px solid #bcbdbe;border-top:none"></div>
<div class="a" style="left:863px;top:223px;width:328px;height:24px;background:#598680"></div>
<svg class="a" style="left:870px;top:227px;" width="16" height="16" viewBox="0 0 16 16"><circle cx="8" cy="8" r="5" fill="none" stroke="#fff" stroke-width="3"/><circle cx="8" cy="8" r="1.3" fill="#fff"/><rect x="6.7" y="0.5" width="2.6" height="3" fill="#fff" transform="rotate(0 8 8)"/><rect x="6.7" y="0.5" width="2.6" height="3" fill="#fff" transform="rotate(45 8 8)"/><rect x="6.7" y="0.5" width="2.6" height="3" fill="#fff" transform="rotate(90 8 8)"/><rect x="6.7" y="0.5" width="2.6" height="3" fill="#fff" transform="rotate(135 8 8)"/><rect x="6.7" y="0.5" width="2.6" height="3" fill="#fff" transform="rotate(180 8 8)"/><rect x="6.7" y="0.5" width="2.6" height="3" fill="#fff" transform="rotate(225 8 8)"/><rect x="6.7" y="0.5" width="2.6" height="3" fill="#fff" transform="rotate(270 8 8)"/><rect x="6.7" y="0.5" width="2.6" height="3" fill="#fff" transform="rotate(315 8 8)"/></svg>
<div class="a" style="left:895px;top:228.5px;font-size:13px;color:#fff;"><span class="c">视图截面</span></div>
<svg class="a" style="left:1147px;top:228px;" width="15" height="15" viewBox="0 0 15 15"><path d="M3.5 5 A5.3 5.3 0 1 0 7.5 2.5" fill="none" stroke="#e8ffff" stroke-width="2"/><path d="M1 3 L5.5 1 L5 6 Z" fill="#e8ffff"/></svg>
<svg class="a" style="left:1168px;top:229px;" width="13" height="13" viewBox="0 0 13 13"><path d="M1 1 L12 12 M12 1 L1 12" stroke="#fff" stroke-width="2.2"/></svg>
<div class="a" style="left:869px;top:251px;width:316px;height:64px;background:#fff;box-shadow:0 1px 0 #d2d2d2"></div>
<div class="a" style="left:876px;top:256.5px;font-size:14px;color:#3a85b6;"><span class="c">类型</span></div>
<svg class="a" style="left:1168px;top:258.5px;" width="11" height="10" viewBox="0 0 11 10"><path d="M1 9 L5.5 1 L10 9" fill="none" stroke="#2e6e94" stroke-width="1.9"/></svg>
<div class="a" style="left:878px;top:281px;width:298px;height:26px;background:#fff;border:1px solid #ababab"></div>
<div class="a" style="left:905px;top:288.0px;font-size:12px;color:#222;"><span class="c">一个平面</span></div>
<svg class="a" style="left:1162px;top:292.0px;" width="9" height="5" viewBox="0 0 9 5"><path d="M0 0 H9 L4.5 5 Z" fill="#111"/></svg>
<svg class="a" style="left:883px;top:285px;" width="18" height="18" viewBox="0 0 18 18"><path d="M3 6 L9 3 L15 6 V12 L9 15 L3 12 Z" fill="#f8d050" stroke="#b07a10"/><path d="M2 12 L9 16 L16 12 V15 L9 18 L2 15 Z" fill="#f6f0f0" stroke="#c03020"/></svg>
<div class="a" style="left:869px;top:319px;width:316px;height:61px;background:#fff;box-shadow:0 1px 0 #d2d2d2"></div>
<div class="a" style="left:876px;top:324.5px;font-size:14px;color:#3a85b6;"><span class="c">名称</span></div>
<svg class="a" style="left:1168px;top:326.5px;" width="11" height="10" viewBox="0 0 11 10"><path d="M1 9 L5.5 1 L10 9" fill="none" stroke="#2e6e94" stroke-width="1.9"/></svg>
<div class="a" style="left:878px;top:354.5px;font-size:12px;color:#1e1e1e;"><span class="c">截面名</span></div>
<div class="a" style="left:1029px;top:349px;width:147px;height:23px;background:#fff;border:1px solid #ababab"></div>
<div class="a" style="left:1034px;top:354.5px;font-size:12px;color:#222;"><span class="c">截面</span> 1</div>
<div class="a" style="left:869px;top:384px;width:316px;height:191px;background:#fff;box-shadow:0 1px 0 #d2d2d2"></div>
<div class="a" style="left:876px;top:389.5px;font-size:14px;color:#3a85b6;"><span class="c">剖切平面</span></div>
<svg class="a" style="left:1168px;top:391.5px;" width="11" height="10" viewBox="0 0 11 10"><path d="M1 9 L5.5 1 L10 9" fill="none" stroke="#2e6e94" stroke-width="1.9"/></svg>
<div class="a" style="left:878px;top:421.0px;font-size:12px;color:#1e1e1e;"><span class="c">方向</span></div>
<div class="a" style="left:1035px;top:415px;width:141px;height:24px;background:#fff;border:1px solid #ababab"></div>
<div class="a" style="left:1040px;top:421.0px;font-size:12px;color:#222;"><span class="c">绝对坐标系</span></div>
<svg class="a" style="left:1162px;top:425.0px;" width="9" height="5" viewBox="0 0 9 5"><path d="M0 0 H9 L4.5 5 Z" fill="#111"/></svg>
<div class="a" style="left:977px;top:441px;width:32px;height:32px;background:#fff;border:1px solid #a8a8a8"></div>
<svg class="a" style="left:977px;top:441px;" width="32" height="32" viewBox="0 0 32 32"><path d="M5 6 V24 L14 28" fill="none" stroke="#2a3ac8" stroke-width="1.3"/><path d="M5 24 L12 28" stroke="#d02020" stroke-width="1.3"/><path d="M6 10 L13 7 V22 L6 24 Z" fill="#dff0e0" stroke="#333"/><path d="M6 22 L22 16" stroke="#20a040" stroke-width="1.2"/><text x="17" y="29" font-size="14" font-weight="bold" font-family="Liberation Sans" fill="#111">X</text></svg>
<div class="a" style="left:1011px;top:441px;width:32px;height:32px;background:#fff;border:1px solid #a8a8a8"></div>
<svg class="a" style="left:1011px;top:441px;" width="32" height="32" viewBox="0 0 32 32"><path d="M5 6 V24 L14 28" fill="none" stroke="#2a3ac8" stroke-width="1.3"/><path d="M5 24 L12 28" stroke="#d02020" stroke-width="1.3"/><path d="M6 10 L13 7 V22 L6 24 Z" fill="#dff0e0" stroke="#333"/><path d="M6 22 L22 16" stroke="#20a040" stroke-width="1.2"/><text x="17" y="15" font-size="14" font-weight="bold" font-family="Liberation Sans" fill="#111">Y</text></svg>
<div class="a" style="left:1045px;top:441px;width:32px;height:32px;background:#fff;border:1px solid #a8a8a8"></div>
<svg class="a" style="left:1045px;top:441px;" width="32" height="32" viewBox="0 0 32 32"><path d="M5 5 V24 L14 28" fill="none" stroke="#2a3ac8" stroke-width="1.3"/><path d="M6 20 L16 16 L25 22 L14 26 Z" fill="#dff0e0" stroke="#333"/><path d="M8 22 L24 14" stroke="#20a040"/><text x="8" y="16" font-size="14" font-weight="bold" font-family="Liberation Sans" fill="#111">Z</text></svg>
<div class="a" style="left:878px;top:484.0px;font-size:12px;color:#1e1e1e;"><span class="c">指定平面</span></div>
<div class="a" style="left:1101px;top:480px;width:24px;height:23px;background:#fff;border:1px solid #a8a8a8"></div>
<svg class="a" style="left:1101px;top:480px;" width="24" height="23" viewBox="0 0 24 23"><path d="M9 5 L18 3 V17 L9 19 Z" fill="#eef4ee" stroke="#333"/><path d="M3 12 Q4 18 10 17" fill="none" stroke="#f08020" stroke-width="2"/><path d="M11 19 H13 M15 19 H17 M19 19 H21" stroke="#111" stroke-width="2"/></svg>
<div class="a" style="left:1127px;top:476px;width:49px;height:31px;background:#fff;border:1px solid #a8a8a8"></div>
<svg class="a" style="left:1127px;top:476px;" width="49" height="31" viewBox="0 0 49 31"><path d="M13 6 L27 9 V27 L13 24 Z" fill="#dff0e0" stroke="#222" stroke-width="1.3"/><circle cx="12" cy="21" r="6" fill="none" stroke="#d02020" stroke-width="1.5"/><path d="M37 13 H43 L40 17 Z" fill="#111"/></svg>
<div class="a" style="left:878px;top:515.0px;font-size:12px;color:#1e1e1e;"><span class="c">反向</span></div>
<div class="a" style="left:1152px;top:509px;width:24px;height:24px;background:#fff;border:1px solid #a8a8a8"></div>
<svg class="a" style="left:1152px;top:509px;" width="24" height="24" viewBox="0 0 24 24"><path d="M6 6 L19 17" stroke="#111" stroke-width="1.1"/><path d="M13 11 L19 5 M11 13 L5 19" stroke="#1a3ab8" stroke-width="1.4"/><path d="M21 3 L16 4 L20 8 Z M3 21 L8 20 L4 16 Z" fill="#1a3ab8"/></svg>
<div class="a" style="left:878px;top:545.0px;font-size:12px;color:#1e1e1e;"><span class="c">备选平面</span></div>
<div class="a" style="left:1144px;top:536px;width:32px;height:31px;background:#fff;border:1px solid #a8a8a8"></div>
<svg class="a" style="left:1144px;top:536px;" width="32" height="31" viewBox="0 0 32 31"><path d="M15 7 A8.5 8.5 0 0 1 24 12" fill="none" stroke="#1a2a90" stroke-width="1.2"/><path d="M23 19 A8.5 8.5 0 0 1 16 25" fill="none" stroke="#1a2a90" stroke-width="1.2"/><path d="M10 23 A8.5 8.5 0 0 1 8 12" fill="none" stroke="#1a2a90" stroke-width="1.2"/><path d="M25 14 L22 10 L26 10 Z M14 25 L18 23 L17 27 Z M7 9 L10 12 L6 13 Z" fill="#1a2a90"/><text x="9" y="14" font-size="11" font-weight="bold" fill="#111" font-family="Liberation Sans">3</text><text x="22" y="21" font-size="11" font-weight="bold" fill="#111" font-family="Liberation Sans">1</text><text x="8" y="29" font-size="11" font-weight="bold" fill="#111" font-family="Liberation Sans">2</text></svg>
<div class="a" style="left:869px;top:579px;width:316px;height:141px;background:#fff;box-shadow:0 1px 0 #d2d2d2"></div>
<div class="a" style="left:876px;top:584.5px;font-size:14px;color:#3a85b6;"><span class="c">偏置</span></div>
<svg class="a" style="left:1168px;top:586.5px;" width="11" height="10" viewBox="0 0 11 10"><path d="M1 9 L5.5 1 L10 9" fill="none" stroke="#2e6e94" stroke-width="1.9"/></svg>
<div class="a" style="left:886px;top:621px;width:198px;height:4px;background:#a9a9a9"></div>
<div class="a" style="left:980px;top:611px;width:11px;height:22px;background:#a9c3c3;border:1px solid #707a7a"></div>
<div class="a" style="left:1094px;top:610px;width:82px;height:22px;background:#fff;border:1px solid #ababab"></div>
<div class="a" style="left:1095px;top:611px;width:78px;height:20px;overflow:hidden"><div class="a" style="left:21.5px;top:3.5px;font-size:16px;letter-spacing:-0.5px;color:#111;font-family:&quot;Liberation Mono&quot;,monospace">0.00000</div></div>
<div class="a" style="left:884px;top:637.0px;font-size:12px;color:#222;">-7.77</div>
<div class="a" style="left:1068px;top:637.0px;font-size:12px;color:#222;">7.77</div>
<div class="a" style="left:878px;top:660.5px;font-size:12px;color:#1e1e1e;"><span class="c">步长</span></div>
<div class="a" style="left:1094px;top:655px;width:82px;height:23px;background:#fff;border:1px solid #ababab"></div>
<div class="a" style="left:1095px;top:656px;width:78px;height:21px;overflow:hidden"><div class="a" style="left:21.5px;top:4.0px;font-size:16px;letter-spacing:-0.5px;color:#111;font-family:&quot;Liberation Mono&quot;,monospace">1.00000</div></div>
<div class="a" style="left:878px;top:680px;width:238px;height:32px;background:#f9d47b"></div>
<svg class="a" style="left:879px;top:688px;" width="14" height="14" viewBox="0 0 14 14"><path d="M1.5 7 L5.5 11.5 L12.5 2" fill="none" stroke="#18b030" stroke-width="3"/></svg>
<div class="a" style="left:899px;top:690.0px;font-size:12px;color:#222;"><span class="c">指定变换</span></div>
<div class="a" style="left:1118px;top:684px;width:24px;height:24px;background:#fff;border:1px solid #a8a8a8"></div>
<svg class="a" style="left:1118px;top:684px;" width="24" height="24" viewBox="0 0 24 24"><path d="M12 4 V14 M7 9 H17" stroke="#111" stroke-width="1.3"/><path d="M3 14 Q4 19 9 18" fill="none" stroke="#f08020" stroke-width="2"/><path d="M11 19 H13 M15 19 H17 M19 19 H21" stroke="#111" stroke-width="2"/></svg>
<div class="a" style="left:1144px;top:680px;width:32px;height:32px;background:#fbe6b3;border:1px solid #f0c870"></div>
<svg class="a" style="left:1144px;top:680px;" width="32" height="32" viewBox="0 0 32 32"><path d="M8 6 V22 L26 28 M8 22 L24 13" fill="none" stroke="#1a3ad0" stroke-width="1.3"/><path d="M8 22 L24 13" stroke="#20b040" stroke-width="1.4"/><path d="M8 22 L24 28" stroke="#d02020" stroke-width="1.4"/><text x="12" y="11" font-size="8" font-weight="bold" fill="#111" font-family="Liberation Sans">Z</text><text x="24" y="16" font-size="8" font-weight="bold" fill="#111" font-family="Liberation Sans">Y</text><text x="24" y="30" font-size="8" font-weight="bold" fill="#111" font-family="Liberation Sans">X</text></svg>
<div class="a" style="left:869px;top:724px;width:316px;height:23px;background:#fff;box-shadow:0 1px 0 #d2d2d2"></div>
<div class="a" style="left:876px;top:729.5px;font-size:14px;color:#3a85b6;"><span class="c">操作</span></div>
<svg class="a" style="left:1168px;top:731px;" width="11" height="10" viewBox="0 0 11 10"><path d="M1 1 L5.5 9 L10 1" fill="none" stroke="#2e6e94" stroke-width="1.9"/></svg>
<div class="a" style="left:869px;top:751px;width:316px;height:23px;background:#fff;box-shadow:0 1px 0 #d2d2d2"></div>
<div class="a" style="left:876px;top:756.5px;font-size:14px;color:#3a85b6;"><span class="c">显示设置</span></div>
<svg class="a" style="left:1168px;top:758px;" width="11" height="10" viewBox="0 0 11 10"><path d="M1 1 L5.5 9 L10 1" fill="none" stroke="#2e6e94" stroke-width="1.9"/></svg>
<div class="a" style="left:869px;top:778px;width:316px;height:154px;background:#fff;box-shadow:0 1px 0 #d2d2d2"></div>
<div class="a" style="left:876px;top:783.5px;font-size:14px;color:#3a85b6;"><span class="c">截断面设置</span></div>
<svg class="a" style="left:1168px;top:785.5px;" width="11" height="10" viewBox="0 0 11 10"><path d="M1 9 L5.5 1 L10 9" fill="none" stroke="#2e6e94" stroke-width="1.9"/></svg>
<div class="a" style="left:878px;top:812px;width:13px;height:13px;background:linear-gradient(#e6e6e6,#fafafa);border:1px solid #8e8f8f"></div>
<svg class="a" style="left:879px;top:813px;" width="11" height="11" viewBox="0 0 11 11"><path d="M2.5 5.5 L5 9 L9 1.5" fill="none" stroke="#3a3aa0" stroke-width="1.6"/></svg>
<div class="a" style="left:896px;top:812.0px;font-size:12px;color:#222;"><span class="c">显示截断面</span></div>
<div class="a" style="left:878px;top:837.5px;font-size:12px;color:#1e1e1e;"><span class="c">颜色选项</span></div>
<div class="a" style="left:1035px;top:831px;width:141px;height:25px;background:#fff;border:1px solid #ababab"></div>
<div class="a" style="left:1040px;top:837.5px;font-size:12px;color:#222;"><span class="c">指定颜色</span></div>
<svg class="a" style="left:1162px;top:841.5px;" width="9" height="5" viewBox="0 0 9 5"><path d="M0 0 H9 L4.5 5 Z" fill="#111"/></svg>
<div class="a" style="left:878px;top:862.5px;font-size:12px;color:#1e1e1e;"><span class="c">截断面颜色</span></div>
<div class="a" style="left:1104px;top:858px;width:72px;height:15px;background:#c8f98c;border:1px solid #8e8e8e"></div>
<div class="a" style="left:878px;top:885px;width:13px;height:13px;background:linear-gradient(#e6e6e6,#fafafa);border:1px solid #8e8f8f"></div>
<div class="a" style="left:896px;top:885.0px;font-size:12px;color:#222;"><span class="c">显示干涉</span></div>
<div class="a" style="left:878px;top:908.5px;font-size:12px;color:#1e1e1e;"><span class="c">干涉颜色</span></div>
<div class="a" style="left:1104px;top:904px;width:72px;height:15px;background:#cf3030;border:1px solid #8e8e8e"></div>
<div class="a" style="left:869px;top:937px;width:316px;height:218px;background:#fff;box-shadow:0 1px 0 #d2d2d2"></div>
<div class="a" style="left:876px;top:942.5px;font-size:14px;color:#3a85b6;"><span class="c">截面曲线设置</span></div>
<svg class="a" style="left:1168px;top:944.5px;" width="11" height="10" viewBox="0 0 11 10"><path d="M1 9 L5.5 1 L10 9" fill="none" stroke="#2e6e94" stroke-width="1.9"/></svg>
<div class="a" style="left:878px;top:971.5px;width:13px;height:13px;background:linear-gradient(#e6e6e6,#fafafa);border:1px solid #8e8f8f"></div>
<svg class="a" style="left:879px;top:972.5px;" width="11" height="11" viewBox="0 0 11 11"><path d="M2.5 5.5 L5 9 L9 1.5" fill="none" stroke="#3a3aa0" stroke-width="1.6"/></svg>
<div class="a" style="left:896px;top:971.5px;font-size:12px;color:#222;"><span class="c">显示截面曲线预览</span></div>
<div class="a" style="left:878px;top:995px;width:13px;height:13px;background:linear-gradient(#e6e6e6,#fafafa);border:1px solid #8e8f8f"></div>
<svg class="a" style="left:879px;top:996px;" width="11" height="11" viewBox="0 0 11 11"><path d="M2.5 5.5 L5 9 L9 1.5" fill="none" stroke="#3a3aa0" stroke-width="1.6"/></svg>
<div class="a" style="left:896px;top:995.0px;font-size:12px;color:#222;"><span class="c">拖动时显示曲线</span></div>
<div class="a" style="left:878px;top:1020.0px;font-size:12px;color:#1e1e1e;"><span class="c">颜色选项</span></div>
<div class="a" style="left:1035px;top:1013px;width:141px;height:25px;background:#fff;border:1px solid #ababab"></div>
<div class="a" style="left:1040px;top:1019.5px;font-size:12px;color:#222;"><span class="c">指定颜色</span></div>
<svg class="a" style="left:1162px;top:1023.5px;" width="9" height="5" viewBox="0 0 9 5"><path d="M0 0 H9 L4.5 5 Z" fill="#111"/></svg>
<div class="a" style="left:878px;top:1044.5px;font-size:12px;color:#1e1e1e;"><span class="c">颜色</span></div>
<div class="a" style="left:1104px;top:1040px;width:72px;height:15px;background:#0000e8;border:1px solid #555"></div>
<div class="a" style="left:878px;top:1070.0px;font-size:12px;color:#1e1e1e;"><span class="c">图层选项</span></div>
<div class="a" style="left:1035px;top:1063px;width:141px;height:25px;background:#fff;border:1px solid #ababab"></div>
<div class="a" style="left:1040px;top:1069.5px;font-size:12px;color:#222;"><span class="c">按指定的</span></div>
<svg class="a" style="left:1162px;top:1073.5px;" width="9" height="5" viewBox="0 0 9 5"><path d="M0 0 H9 L4.5 5 Z" fill="#111"/></svg>
<div class="a" style="left:878px;top:1096.0px;font-size:12px;color:#1e1e1e;"><span class="c">图层</span></div>
<div class="a" style="left:1094px;top:1090px;width:82px;height:23px;background:#fff;border:1px solid #ababab"></div>
<div class="a" style="right:751px;top:1095.0px;font-size:16px;color:#111;text-align:right;font-family:"Liberation Mono",monospace">1</div>
<div class="a" style="left:878px;top:1125.0px;font-size:12px;color:#1e1e1e;"><span class="c">保存截面曲线的副本</span></div>
<div class="a" style="left:1144px;top:1115px;width:32px;height:32px;background:#fff;border:1px solid #a8a8a8"></div>
<svg class="a" style="left:1144px;top:1115px;" width="32" height="32" viewBox="0 0 32 32"><path d="M7 9 L16 7 V24 L7 26 Z" fill="#e0f0e0" stroke="#333"/><path d="M15 6 L25 4 V22 L15 24 Z" fill="#e0f0e0" stroke="#333"/><rect x="10" y="13" width="8" height="8" fill="none" stroke="#d02020" stroke-width="1.3"/><rect x="8" y="15" width="6" height="6" fill="none" stroke="#3040c0" stroke-width="1.3"/></svg>
<div class="a" style="left:869px;top:1159px;width:316px;height:59px;background:#fff;box-shadow:0 1px 0 #d2d2d2"></div>
<div class="a" style="left:876px;top:1164.5px;font-size:14px;color:#3a85b6;">2D <span class="c">查看器设置</span></div>
<svg class="a" style="left:1168px;top:1166.5px;" width="11" height="10" viewBox="0 0 11 10"><path d="M1 9 L5.5 1 L10 9" fill="none" stroke="#2e6e94" stroke-width="1.9"/></svg>
<div class="a" style="left:878px;top:1193.5px;width:13px;height:13px;background:linear-gradient(#e6e6e6,#fafafa);border:1px solid #8e8f8f"></div>
<div class="a" style="left:896px;top:1193.5px;font-size:12px;color:#222;"><span class="c">显示</span> 2D <span class="c">查看器</span></div>
<div class="a" style="left:869px;top:1222px;width:316px;height:143px;background:#fff;box-shadow:0 1px 0 #d2d2d2"></div>
<div class="a" style="left:876px;top:1227.5px;font-size:14px;color:#3a85b6;"><span class="c">截面系列设置</span></div>
<svg class="a" style="left:1168px;top:1229.5px;" width="11" height="10" viewBox="0 0 11 10"><path d="M1 9 L5.5 1 L10 9" fill="none" stroke="#2e6e94" stroke-width="1.9"/></svg>
<div class="a" style="left:878px;top:1258.0px;font-size:12px;color:#1e1e1e;"><span class="c">截面数</span></div>
<div class="a" style="left:1094px;top:1252px;width:82px;height:23px;background:#fff;border:1px solid #ababab"></div>
<div class="a" style="right:751px;top:1257.0px;font-size:16px;color:#111;text-align:right;font-family:"Liberation Mono",monospace">1</div>
<div class="a" style="left:878px;top:1283.0px;font-size:12px;color:#1e1e1e;"><span class="c">截面间距</span></div>
<div class="a" style="left:1094px;top:1277px;width:82px;height:23px;background:#fff;border:1px solid #ababab"></div>
<div class="a" style="left:1095px;top:1278px;width:78px;height:21px;overflow:hidden"><div class="a" style="left:21.5px;top:4.0px;font-size:16px;letter-spacing:-0.5px;color:#111;font-family:&quot;Liberation Mono&quot;,monospace">0.80000</div></div>
<div class="a" style="left:878px;top:1306.5px;width:13px;height:13px;background:linear-gradient(#e6e6e6,#fafafa);border:1px solid #8e8f8f"></div>
<div class="a" style="left:896px;top:1306.5px;font-size:12px;color:#222;"><span class="c">反向系列</span></div>
<div class="a" style="left:878px;top:1335.0px;font-size:12px;color:#1e1e1e;"><span class="c">预览系列</span></div>
<div class="a" style="left:1144px;top:1325px;width:32px;height:31px;background:#fff;border:1px solid #a8a8a8"></div>
<svg class="a" style="left:1144px;top:1325px;" width="32" height="31" viewBox="0 0 32 31"><circle cx="13" cy="13" r="7" fill="#f4f8fc" stroke="#444" stroke-width="1.5"/><path d="M18 18 L25 25" stroke="#555" stroke-width="3"/><path d="M13 8 L14 12 L18 13 L14 14 L13 18 L12 14 L8 13 L12 12 Z" fill="#e8d020"/></svg>
<div class="a" style="left:1062px;top:1377px;width:54px;height:25px;background:#a3d0ec;border:1px solid #5aa2d5"></div>
<div class="a" style="left:1077px;top:1383.5px;font-size:12px;color:#222;"><span class="c">确定</span></div>
<div class="a" style="left:1121px;top:1377px;width:54px;height:25px;background:#d2d3d4;border:1px solid #b9b9ba"></div>
<div class="a" style="left:1136px;top:1383.5px;font-size:12px;color:#222;"><span class="c">取消</span></div>
<div class="a" style="left:12px;top:6.0px;font-size:22px;color:#8a98a8;font-weight:bold;letter-spacing:0px">NX</div>
<div class="a" style="left:49px;top:5px;width:1px;height:24px;background:#e4e4e4"></div>
<svg class="a" style="left:60px;top:6px;" width="21" height="21" viewBox="0 0 21 21"><rect x="1" y="1" width="19" height="19" rx="1" fill="#2a3aa8"/><rect x="4" y="2" width="13" height="8" fill="#e8eef8"/><rect x="5" y="13" width="11" height="7" fill="#111"/><rect x="7" y="14" width="3" height="5" fill="#7a8ae0"/></svg>
<div class="a" style="left:89px;top:5px;width:1px;height:24px;background:#e4e4e4"></div>
<svg class="a" style="left:97px;top:7px;" width="22" height="20" viewBox="0 0 22 20"><path d="M5 8 Q16 2 18 13 Q16 18 12 19" fill="none" stroke="#9ba4b4" stroke-width="3"/><path d="M1 4 L9 4 L3 12 Z" fill="#9ba4b4"/></svg>
<svg class="a" style="left:126px;top:14px;" width="8" height="5" viewBox="0 0 8 5"><path d="M0 0 H8 L4 5 Z" fill="#333"/></svg>
<svg class="a" style="left:141px;top:7px;" width="22" height="20" viewBox="0 0 22 20"><path d="M17 8 Q6 2 4 13 Q6 18 10 19" fill="none" stroke="#b8c0cc" stroke-width="3"/><path d="M21 4 L13 4 L19 12 Z" fill="#b8c0cc"/></svg>
<div class="a" style="left:169px;top:5px;width:1px;height:24px;background:#e4e4e4"></div>
<svg class="a" style="left:175px;top:6px;" width="22" height="22" viewBox="0 0 22 22"><circle cx="5" cy="17" r="3.5" fill="none" stroke="#b4b4b4" stroke-width="2"/><circle cx="10" cy="20" r="3" fill="none" stroke="#b4b4b4" stroke-width="2"/><path d="M7 14 L20 3 M11 17 L19 8" stroke="#b4b4b4" stroke-width="2"/></svg>
<svg class="a" style="left:207px;top:6px;" width="22" height="22" viewBox="0 0 22 22"><rect x="2" y="2" width="11" height="14" fill="#ddd" stroke="#aaa"/><rect x="8" y="7" width="12" height="14" fill="#ccc" stroke="#aaa"/></svg>
<svg class="a" style="left:239px;top:6px;" width="22" height="22" viewBox="0 0 22 22"><rect x="3" y="4" width="16" height="17" fill="#d4d4d4" stroke="#aaa"/><rect x="7" y="2" width="8" height="4" fill="#bbb"/><rect x="8" y="9" width="12" height="12" fill="#e4e4e4" stroke="#aaa"/></svg>
<div class="a" style="left:267px;top:5px;width:1px;height:24px;background:#e4e4e4"></div>
<svg class="a" style="left:274px;top:4px;" width="26" height="26" viewBox="0 0 26 26"><path d="M9 1 L15 7 L9 13 L3 7 Z" fill="#2a3aa0"/><path d="M9 3 L13 7 L9 11 Z" fill="#fff"/><path d="M1 15 L7 19 L1 24 Z" fill="#e02020"/><path d="M16 12 L23 18 L16 24 L10 18 Z" fill="#b4c8f0" stroke="#8aa0d8"/></svg>
<svg class="a" style="left:306px;top:14px;" width="8" height="5" viewBox="0 0 8 5"><path d="M0 0 H8 L4 5 Z" fill="#333"/></svg>
<div class="a" style="left:317px;top:5px;width:1px;height:24px;background:#e4e4e4"></div>
<svg class="a" style="left:323px;top:6px;" width="26" height="22" viewBox="0 0 26 22"><path d="M2 13 L14 6 L20 8 L24 4 L25 10 L18 15 L8 19 Z" fill="#f0c890" stroke="#a07040"/><path d="M19 5 L25 3 L26 9 Z" fill="#2a3ab0"/></svg>
<div class="a" style="left:355px;top:5px;width:1px;height:24px;background:#e4e4e4"></div>
<svg class="a" style="left:361px;top:4px;" width="26" height="26" viewBox="0 0 26 26"><rect x="1" y="4" width="17" height="18" fill="#eee" stroke="#999" stroke-dasharray="2 1"/><rect x="6" y="2" width="18" height="18" fill="#cfdcf8" stroke="#5060c0"/><path d="M9 9 L15 6 L21 9 V16 L15 19 L9 16 Z" fill="#f8d860" stroke="#c89a20"/></svg>
<div class="a" style="left:389px;top:10.5px;font-size:11px;color:#222;"><span class="c">窗口</span></div>
<svg class="a" style="left:414px;top:14px;" width="8" height="5" viewBox="0 0 8 5"><path d="M0 0 H8 L4 5 Z" fill="#333"/></svg>
<svg class="a" style="left:425px;top:13px;" width="8" height="7" viewBox="0 0 8 7"><path d="M0 0 H8 M0 2 H8 L4 7 Z" stroke="#333" fill="#333"/></svg>
<div class="a" style="left:633px;top:10.5px;font-size:13px;color:#222;">NX 10 - <span class="c">建模</span> - [_model1.prt<span class="c">（修改的）</span>]</div>
<div class="a" style="left:1057px;top:10.5px;font-size:13px;color:#129aa0;font-weight:bold;letter-spacing:0.5px">SIEMENS</div>
<div class="a" style="left:1144px;top:22px;width:9px;height:2px;background:#333"></div>
<svg class="a" style="left:1165px;top:10px;" width="13" height="13" viewBox="0 0 13 13"><rect x="3.5" y="0.5" width="9" height="8" fill="none" stroke="#333" stroke-width="1.5"/><rect x="0.5" y="4" width="9" height="8.5" fill="#fff" stroke="#333" stroke-width="1.5"/></svg>
<svg class="a" style="left:1188px;top:10px;" width="13" height="13" viewBox="0 0 13 13"><path d="M1 1 L12 12 M12 1 L1 12" stroke="#333" stroke-width="2"/></svg>
<div class="a" style="left:8px;top:34px;width:81px;height:28px;background:#5b8982"></div>
<div class="a" style="left:27px;top:41.0px;font-size:13px;color:#f0f8f8;"><span class="c">文件</span>(F)</div>
<div class="a" style="left:377px;top:34px;width:52px;height:28px;background:#eef4f4;border-left:1px solid #d4dede;border-right:1px solid #d4dede"></div>
<div class="a" style="left:104px;top:41.0px;font-size:13px;color:#2a2a2a;"><span class="c">主页</span></div>
<div class="a" style="left:156px;top:41.0px;font-size:13px;color:#2a2a2a;"><span class="c">装配</span></div>
<div class="a" style="left:208px;top:41.0px;font-size:13px;color:#2a2a2a;"><span class="c">分析</span></div>
<div class="a" style="left:260px;top:41.0px;font-size:13px;color:#2a2a2a;"><span class="c">开发人员</span></div>
<div class="a" style="left:338px;top:41.0px;font-size:13px;color:#2a2a2a;"><span class="c">渲染</span></div>
<div class="a" style="left:390px;top:41.0px;font-size:13px;color:#3485b5;"><span class="c">视图</span></div>
<div class="a" style="left:442px;top:41.0px;font-size:13px;color:#2a2a2a;"><span class="c">曲线</span></div>
<div class="a" style="left:494px;top:41.0px;font-size:13px;color:#2a2a2a;"><span class="c">曲面</span></div>
<div class="a" style="left:546px;top:41.0px;font-size:13px;color:#2a2a2a;"><span class="c">工具</span></div>
<div class="a" style="left:598px;top:41.0px;font-size:13px;color:#2a2a2a;"><span class="c">应用模块</span></div>
<div class="a" style="left:931px;top:38px;width:132px;height:20px;background:#fff;border:1px solid #b8c4c4"></div>
<div class="a" style="left:935px;top:42.5px;font-size:11px;color:#a0a0a0;"><span class="c">查找命令</span></div>
<svg class="a" style="left:1039px;top:40px;" width="16" height="16" viewBox="0 0 16 16"><circle cx="9.5" cy="6.5" r="5" fill="none" stroke="#333" stroke-width="1.5"/><path d="M6 10 L1.5 14.5" stroke="#333" stroke-width="2.2"/></svg>
<svg class="a" style="left:1069px;top:40px;" width="15" height="15" viewBox="0 0 15 15"><path d="M1 4 V1 H4 M11 1 H14 V4 M14 11 V14 H11 M4 14 H1 V11" fill="none" stroke="#555"/><rect x="4" y="4" width="7" height="7" fill="#3a5aa0" stroke="#222"/></svg>
<svg class="a" style="left:1095px;top:42px;" width="14" height="9" viewBox="0 0 14 9"><path d="M1 8 L7 2 L13 8" fill="none" stroke="#222" stroke-width="1.8"/></svg>
<svg class="a" style="left:1120px;top:40px;" width="16" height="16" viewBox="0 0 16 16"><circle cx="8" cy="8" r="7.5" fill="#3a7ed8"/><text x="4.3" y="12.5" font-size="12" font-weight="bold" fill="#fff" font-family="Liberation Sans">?</text></svg>
<div class="a" style="left:1144px;top:52px;width:9px;height:2px;background:#222"></div>
<svg class="a" style="left:1165px;top:41px;" width="13" height="13" viewBox="0 0 13 13"><rect x="3.5" y="0.5" width="9" height="8" fill="none" stroke="#222" stroke-width="1.5"/><rect x="0.5" y="4" width="9" height="8.5" fill="#cfdcdc" stroke="#222" stroke-width="1.5"/></svg>
<svg class="a" style="left:1188px;top:41px;" width="13" height="13" viewBox="0 0 13 13"><path d="M1 1 L12 12 M12 1 L1 12" stroke="#222" stroke-width="2"/></svg>
<svg class="a" style="left:18px;top:65px;" width="50" height="40" viewBox="0 0 50 40"><path d="M1 12 L10 7 V30 L1 35 Z M10 30 L26 38 M1 35 L18 42" fill="#eee" stroke="#888" stroke-dasharray="2 1"/><rect x="10" y="2" width="38" height="33" fill="#d8e4f8" stroke="#5a6ad0"/><rect x="10" y="2" width="38" height="5" fill="#6a7ad8"/><path d="M18 14 L28 9 L40 14 V26 L30 32 L18 27 Z" fill="#f8dc60" stroke="#d0a830"/><path d="M18 14 L30 19 L40 14 M30 19 V32" fill="none" stroke="#d0a830"/></svg>
<div class="a" style="left:31px;top:121.5px;font-size:11px;color:#222;"><span class="c">窗口</span></div>
<svg class="a" style="left:38px;top:140px;" width="8" height="5" viewBox="0 0 8 5"><path d="M0 0 H8 L4 5 Z" fill="#222"/></svg>
<div class="a" style="left:74px;top:67px;width:1px;height:103px;background:#e2e6e6"></div>
<svg class="a" style="left:87px;top:67px;" width="23" height="23" viewBox="0 0 23 23"><path d="M4 15 V7 L11 2 L15 3 V12 Z" fill="#cfcfcf" stroke="#555" stroke-width="1.2"/><path d="M2 15 L13 10 L22 15 L11 21 Z" fill="#cfcfcf" stroke="#555" stroke-width="1.2"/><path d="M2 15 V18 L11 23 L22 18 V15" fill="#aaa" stroke="#555"/><ellipse cx="11" cy="16" rx="1.6" ry="1" fill="#fff" stroke="#555"/></svg>
<svg class="a" style="left:120px;top:67px;" width="23" height="23" viewBox="0 0 23 23"><rect x="1" y="1" width="21" height="21" rx="2" fill="#cfcfcf" stroke="#555" stroke-width="1.2"/><path d="M5 1 V22 M1 14 H5" stroke="#555"/><circle cx="16" cy="17" r="2" fill="#fff" stroke="#555"/></svg>
<svg class="a" style="left:153px;top:67px;" width="23" height="23" viewBox="0 0 23 23"><path d="M4 15 V8 L10 2 L15 3 V12 Z" fill="#cfcfcf" stroke="#555" stroke-width="1.2"/><path d="M2 15 L13 10 L22 15 L11 21 Z" fill="#cfcfcf" stroke="#555" stroke-width="1.2"/><path d="M2 15 V18 L11 23 L22 18 V15" fill="#aaa" stroke="#555"/><ellipse cx="10" cy="16" rx="1.6" ry="1" fill="#fff" stroke="#555"/></svg>
<svg class="a" style="left:87px;top:99px;" width="23" height="23" viewBox="0 0 23 23"><path d="M1 1 H13 L21 11 V21 H1 Z" fill="#cfcfcf" stroke="#555" stroke-width="1.2"/></svg>
<svg class="a" style="left:120px;top:99px;" width="23" height="23" viewBox="0 0 23 23"><path d="M1 1 H6 V16 H21 V21 H1 Z" fill="#cfcfcf" stroke="#555" stroke-width="1.2"/></svg>
<svg class="a" style="left:153px;top:99px;" width="23" height="23" viewBox="0 0 23 23"><path d="M1 11 L9 1 H21 V21 H1 Z M1 16 H21" fill="#cfcfcf" stroke="#555" stroke-width="1.2"/></svg>
<svg class="a" style="left:87px;top:128px;" width="23" height="23" viewBox="0 0 23 23"><path d="M16 1 H21 V21 H1 V16 H16 Z" fill="#cfcfcf" stroke="#555" stroke-width="1.2"/></svg>
<svg class="a" style="left:120px;top:128px;" width="23" height="23" viewBox="0 0 23 23"><path d="M1 1 H16 Q21 1 21 6 V21 H1 Z" fill="#cfcfcf" stroke="#555" stroke-width="1.2"/><circle cx="16" cy="6" r="2" fill="#fff" stroke="#555"/></svg>
<svg class="a" style="left:199px;top:69px;" width="23" height="23" viewBox="0 0 23 23"><rect x="1" y="1" width="21" height="19" fill="#eef2f8" stroke="#3040b0" stroke-dasharray="2 1"/><rect x="1" y="1" width="21" height="3" fill="#5a6ac8"/><circle cx="11" cy="11" r="6" fill="#fff" stroke="#555" stroke-width="1.5"/><path d="M15 15 L21 21" stroke="#555" stroke-width="2"/><circle cx="22" cy="2" r="2" fill="#d02020"/><circle cx="1" cy="20" r="2" fill="#d02020"/></svg>
<svg class="a" style="left:233px;top:69px;" width="23" height="23" viewBox="0 0 23 23"><rect x="1" y="1" width="21" height="19" fill="#dce4f6" stroke="#5060c0"/><rect x="1" y="1" width="21" height="3" fill="#5a6ac8"/><path d="M5 7 L9 10 M18 7 L14 10 M5 18 L9 14 M18 18 L14 14" stroke="#e04020" stroke-width="1.5"/></svg>
<svg class="a" style="left:199px;top:99px;" width="23" height="23" viewBox="0 0 23 23"><rect x="1" y="2" width="20" height="17" fill="#dde4f4" stroke="#a0a8c8"/><path d="M10 20 Q8 12 12 10 L16 8 L20 12 L19 20 Z" fill="#f4d8a8" stroke="#c09050"/></svg>
<svg class="a" style="left:233px;top:99px;" width="23" height="23" viewBox="0 0 23 23"><path d="M2 14 L15 7 L20 9 L20 14 L7 21 L2 19 Z" fill="#6070d8" stroke="#3040a0"/><path d="M2 14 L15 7 L20 9 L7 16 Z" fill="#a8b4f0"/><circle cx="21" cy="2" r="1.5" fill="#d02020"/></svg>
<svg class="a" style="left:199px;top:128px;" width="23" height="23" viewBox="0 0 23 23"><path d="M4 12 A8 8 0 0 1 18 6" fill="none" stroke="#4a5ac8" stroke-width="2.5"/><path d="M19 11 A8 8 0 0 1 5 17" fill="none" stroke="#4a5ac8" stroke-width="2.5"/><path d="M15 2 L21 4 L17 9 Z M8 21 L2 19 L6 14 Z" fill="#4a5ac8"/></svg>
<svg class="a" style="left:233px;top:128px;" width="23" height="23" viewBox="0 0 23 23"><rect x="2" y="1" width="12" height="14" fill="#f2f2f2" stroke="#aaa"/><path d="M4 5 H12 M4 9 H12" stroke="#aaa"/><path d="M8 16 L18 11 L22 14 L12 20 Z" fill="#eee" stroke="#aaa"/></svg>
<div class="a" style="left:268px;top:67px;width:53px;height:49px;background:#fff;border:1px solid #eef0f0;border-radius:3px"></div>
<svg class="a" style="left:282px;top:79px;" width="24" height="22" viewBox="0 0 24 22"><rect x="1" y="1" width="22" height="20" fill="#dfe8f6" stroke="#4a5ab8"/><rect x="1" y="1" width="22" height="3" fill="#4a5ab8"/><path d="M6 7 V17 L17 17 M6 17 L15 9" fill="none" stroke="#d02020" stroke-width="1.5"/></svg>
<div class="a" style="left:283px;top:121.5px;font-size:11px;color:#222;"><span class="c">更多</span></div>
<svg class="a" style="left:290px;top:140px;" width="8" height="5" viewBox="0 0 8 5"><path d="M0 0 H8 L4 5 Z" fill="#222"/></svg>
<div class="a" style="left:179px;top:159.5px;font-size:11px;color:#3d88b8;"><span class="c">方位</span></div>
<svg class="a" style="left:310px;top:163px;" width="8" height="5" viewBox="0 0 8 5"><path d="M0 0 H8 L4 5 Z" fill="#222"/></svg>
<div class="a" style="left:325px;top:67px;width:1px;height:103px;background:#e2e6e6"></div>
<svg class="a" style="left:339px;top:75px;" width="50" height="36" viewBox="0 0 50 36"><path d="M2 2 L14 11 L2 19 Z" fill="#38b048"/><path d="M2 19 L14 27 L2 35 Z" fill="#d03a2a"/><path d="M30 5 L46 19 L30 33 L16 19 Z" fill="#c8d4f4" stroke="#7080c8" stroke-width="1.5"/><path d="M30 10 L38 19 L30 28 L22 19 Z" fill="#4a5ac0"/></svg>
<div class="a" style="left:337px;top:121.5px;font-size:11px;color:#222;"><span class="c">显示和隐藏</span></div>
<div class="a" style="left:405px;top:67px;width:123px;height:90px;background:#fff;border:1px solid #dcdcdc"></div>
<svg class="a" style="left:409px;top:70px;" width="24" height="22" viewBox="0 0 24 22"><path d="M8 1 L15 8 L8 15 L1 8 Z" fill="#dde2f0" stroke="#b8c0d8"/><path d="M12 6 V20 L15 17 L18 22 L20 21 L17 16 L21 16 Z" fill="#fff" stroke="#333"/></svg>
<div class="a" style="left:436px;top:75.5px;font-size:11px;color:#222;"><span class="c">立即隐藏</span></div>
<svg class="a" style="left:408px;top:100px;" width="24" height="24" viewBox="0 0 24 24"><path d="M7 1 L13 7 L7 13 L1 7 Z" fill="#2a3aa0"/><path d="M7 3.5 L10.5 7 L7 10.5 Z" fill="#fff"/><path d="M1 14 L6 18 L1 22 Z" fill="#e02020"/><path d="M15 10 L22 17 L15 24 L8 17 Z" fill="#c4d0f4" stroke="#8aa0d8"/></svg>
<div class="a" style="left:436px;top:105.5px;font-size:11px;color:#222;"><span class="c">隐藏</span></div>
<svg class="a" style="left:408px;top:130px;" width="24" height="24" viewBox="0 0 24 24"><path d="M7 1 L13 7 L7 13 L1 7 Z" fill="#c4d0f4" stroke="#8aa0d8"/><path d="M1 14 L6 18 L1 22 Z" fill="#30b040"/><path d="M15 10 L22 17 L15 24 L8 17 Z" fill="#2a3aa0"/><path d="M15 13 L18.5 17 L15 21 Z" fill="#fff"/></svg>
<div class="a" style="left:436px;top:135.5px;font-size:11px;color:#222;"><span class="c">显示</span></div>
<svg class="a" style="left:532px;top:79px;" width="8" height="5" viewBox="0 0 8 5"><path d="M0 5 L4 0 L8 5 Z" fill="#c8c8c8"/></svg>
<svg class="a" style="left:532px;top:109px;" width="8" height="5" viewBox="0 0 8 5"><path d="M0 0 H8 L4 5 Z" fill="#222"/></svg>
<svg class="a" style="left:532px;top:137px;" width="8" height="8" viewBox="0 0 8 8"><path d="M0 0 H8 M0 3 H8 L4 8 Z" stroke="#222" fill="#222"/></svg>
<div class="a" style="left:556px;top:69px;width:49px;height:20px;background:#fff;border:1px solid #a8a8a8"></div>
<div class="a" style="left:560px;top:73.5px;font-size:11px;color:#111;">1</div>
<svg class="a" style="left:590px;top:77px;" width="8" height="5" viewBox="0 0 8 5"><path d="M0 0 H8 L4 5 Z" fill="#222"/></svg>
<svg class="a" style="left:556px;top:96px;" width="24" height="24" viewBox="0 0 24 24"><path d="M2 5 L12 1 L22 5 L12 9 Z" fill="#c8e8d0" stroke="#7a9a80"/><path d="M2 18 L12 14 L22 18 L12 22 Z" fill="#c8e8d0" stroke="#7a9a80"/><path d="M12 6 V16" stroke="#e06020" stroke-width="2"/><path d="M9 13 L12 17 L15 13 Z" fill="#e06020"/></svg>
<div class="a" style="left:583px;top:102.5px;font-size:11px;color:#222;"><span class="c">移动至图层</span></div>
<svg class="a" style="left:556px;top:126px;" width="24" height="24" viewBox="0 0 24 24"><path d="M2 6 L12 2 L22 6 L12 10 Z M2 10 L12 6 L22 10 L12 14 Z M2 14 L12 10 L22 14 L12 18 Z" fill="#d8ecd8" stroke="#8a9a8a"/><rect x="11" y="9" width="11" height="13" fill="#e8e8f8" stroke="#8080b0"/><path d="M13 12 H20 M13 15 H20 M13 18 H20" stroke="#8080b0"/></svg>
<div class="a" style="left:583px;top:132.5px;font-size:11px;color:#222;"><span class="c">图层设置</span></div>
<svg class="a" style="left:650px;top:67px;" width="24" height="24" viewBox="0 0 24 24"><path d="M3 6 L10 3 V19 L3 22 Z" fill="#b8c4f0" stroke="#3a4aa0"/><path d="M10 3 L14 5 V21 L10 19" fill="#8a9ae0" stroke="#3a4aa0"/><path d="M14 12 H22" stroke="#2a3ab0" stroke-width="1.5"/><path d="M19 9 L23 12 L19 15 Z" fill="#2a3ab0"/></svg>
<div class="a" style="left:676px;top:72.5px;font-size:11px;color:#222;"><span class="c">编辑截面</span></div>
<div class="a" style="left:645px;top:94px;width:79px;height:29px;background:#c9d8d8;border:1px solid #b8caca"></div>
<svg class="a" style="left:649px;top:97px;" width="24" height="24" viewBox="0 0 24 24"><path d="M1 2 L6 6 L1 10 Z" fill="#30b040"/><path d="M1 12 L6 16 L1 20 Z" fill="#e02020"/><path d="M6 6 L12 3 V20 L6 23 Z" fill="#fff" stroke="#3a4aa0"/><path d="M12 3 L15 5 V21 L12 20" fill="#8a9ae0" stroke="#3a4aa0"/><path d="M15 12 H22" stroke="#2a3ab0" stroke-width="1.5"/><path d="M19 9 L23 12 L19 15 Z" fill="#2a3ab0"/></svg>
<div class="a" style="left:677px;top:103.5px;font-size:11px;color:#111;"><span class="c">剪切截面</span></div>
<svg class="a" style="left:650px;top:127px;" width="24" height="24" viewBox="0 0 24 24"><path d="M2 4 L13 1 L22 6 V20 L11 23 L2 18 Z" fill="#e8c89a" stroke="#c8a070"/><path d="M2 4 L11 9 V23 L2 18 Z" fill="#d4d4d4" stroke="#aaa"/></svg>
<div class="a" style="left:676px;top:132.5px;font-size:11px;color:#222;"><span class="c">全部通透显示</span></div>
<div class="a" style="left:753px;top:67px;width:54px;height:49px;background:#fff;border:1px solid #eef0f0;border-radius:3px"></div>
<svg class="a" style="left:767px;top:80px;" width="26" height="22" viewBox="0 0 26 22"><path d="M1 2 L7 7 L1 11 Z" fill="#30b040"/><path d="M1 11 L7 15 L1 20 Z" fill="#d03020"/><path d="M16 3 L25 11 L16 19 L7 11 Z" fill="#c8d4f4" stroke="#7080c8"/><path d="M16 7 L20 11 L16 15 Z" fill="#4a5ac0"/></svg>
<div class="a" style="left:768px;top:121.5px;font-size:11px;color:#222;"><span class="c">更多</span></div>
<svg class="a" style="left:775px;top:140px;" width="8" height="5" viewBox="0 0 8 5"><path d="M0 0 H8 L4 5 Z" fill="#222"/></svg>
<div class="a" style="left:543px;top:159.5px;font-size:11px;color:#3d88b8;"><span class="c">可见性</span></div>
<svg class="a" style="left:796px;top:163px;" width="8" height="5" viewBox="0 0 8 5"><path d="M0 0 H8 L4 5 Z" fill="#222"/></svg>
<div class="a" style="left:810px;top:67px;width:1px;height:103px;background:#e2e6e6"></div>
<svg class="a" style="left:825px;top:68px;" width="23" height="23" viewBox="0 0 23 23"><path d="M2 6 L10 2 L21 5 L13 9 Z" fill="#c8cef8" stroke="#4a58c8"/><path d="M2 6 L13 9 V21 L2 18 Z" fill="#8a96e8" stroke="#4a58c8"/><path d="M13 9 L21 5 V17 L13 21 Z" fill="#5a68d0" stroke="#4a58c8"/></svg>
<svg class="a" style="left:858px;top:68px;" width="23" height="23" viewBox="0 0 23 23"><path d="M2 6 L10 2 L21 5 L13 9 Z" fill="#fff" stroke="#4a58c8"/><path d="M2 6 L13 9 V21 L2 18 Z" fill="#f0f2fc" stroke="#4a58c8"/><path d="M13 9 L21 5 V17 L13 21 Z" fill="#e8eaf8" stroke="#4a58c8"/></svg>
<svg class="a" style="left:890px;top:68px;" width="24" height="22" viewBox="0 0 24 22"><path d="M2 18 Q6 6 12 8 T22 4 L20 14 Q15 18 10 15 T3 20 Z" fill="url(#rbw)"/><defs><linearGradient id="rbw" x1="0" y1="0" x2="1" y2="0"><stop offset="0" stop-color="#f0d020"/><stop offset="0.3" stop-color="#f05020"/><stop offset="0.5" stop-color="#40c040"/><stop offset="0.75" stop-color="#3a6ae0"/><stop offset="1" stop-color="#c040d0"/></linearGradient></defs></svg>
<svg class="a" style="left:825px;top:98px;" width="23" height="23" viewBox="0 0 23 23"><path d="M2 6 L10 2 L21 5 L13 9 Z" fill="#c0c8f0" stroke="#4a58c8"/><path d="M2 6 L13 9 V21 L2 18 Z" fill="#a0acec" stroke="#4a58c8"/><path d="M13 9 L21 5 V17 L13 21 Z" fill="#5a68d0" stroke="#4a58c8"/></svg>
<svg class="a" style="left:858px;top:98px;" width="23" height="23" viewBox="0 0 23 23"><path d="M2 6 L10 2 L21 5 V17 L13 21 L2 18 Z M2 6 L13 9 L21 5 M13 9 V21" fill="none" stroke="#4a58c8" stroke-width="1.2"/><path d="M2 18 L10 14 L21 17 M10 2 V14" fill="none" stroke="#a0a8e0"/></svg>
<svg class="a" style="left:825px;top:128px;" width="23" height="23" viewBox="0 0 23 23"><path d="M2 6 L10 2 L21 5 L13 9 Z" fill="#fff" stroke="#4a58c8"/><path d="M2 6 L13 9 V21 L2 18 Z" fill="#fff" stroke="#4a58c8"/><path d="M13 9 L21 5 V17 L13 21 Z" fill="#7080d8" stroke="#4a58c8"/></svg>
<svg class="a" style="left:858px;top:128px;" width="23" height="23" viewBox="0 0 23 23"><path d="M2 6 L10 2 L21 5 V17 L13 21 L2 18 Z M2 6 L13 9 L21 5 M13 9 V21" fill="none" stroke="#4a58c8" stroke-width="1.2"/><path d="M2 18 L10 14 L21 17 M10 2 V14" fill="none" stroke="#a0a8e0"/></svg>
<div class="a" style="left:848px;top:159.5px;font-size:11px;color:#3d88b8;"><span class="c">样式</span></div>
<svg class="a" style="left:909px;top:163px;" width="8" height="5" viewBox="0 0 8 5"><path d="M0 0 H8 L4 5 Z" fill="#222"/></svg>
<div class="a" style="left:925px;top:67px;width:1px;height:103px;background:#e2e6e6"></div>
<svg class="a" style="left:936px;top:67px;" width="24" height="24" viewBox="0 0 24 24"><rect x="1" y="7" width="14" height="11" fill="#8ab0e0" stroke="#3a5a90"/><rect x="6" y="18" width="4" height="3" fill="#666"/><rect x="3" y="21" width="10" height="2" fill="#888"/><path d="M10 9 L20 2" stroke="#c89060" stroke-width="3"/><circle cx="21" cy="2" r="2" fill="#3a4ab0"/></svg>
<div class="a" style="left:965px;top:72.5px;font-size:11px;color:#222;"><span class="c">首选项</span></div>
<svg class="a" style="left:936px;top:97px;" width="24" height="24" viewBox="0 0 24 24"><path d="M2 10 Q2 1 12 2 Q20 3 19 10 Q17 15 11 13 Q8 20 3 21 Q6 15 2 10 Z" fill="#f4dc90" stroke="#a08040"/><circle cx="7" cy="7" r="1.5" fill="#e04040"/><circle cx="12" cy="5" r="1.5" fill="#40a0e0"/><path d="M15 7 L22 12 L15 17 Z" fill="#4a5ab8"/></svg>
<div class="a" style="left:965px;top:102.5px;font-size:11px;color:#222;"><span class="c">编辑对象显示</span></div>
<div class="a" style="left:936px;top:128.5px;font-size:11px;color:#3a4a80;font-weight:bold;letter-spacing:-0.5px">PNG</div>
<svg class="a" style="left:951px;top:140px;" width="8" height="10" viewBox="0 0 8 10"><path d="M0 0 L7 5 L0 10 Z" fill="#c040c0"/></svg>
<div class="a" style="left:965px;top:132.5px;font-size:11px;color:#222;"><span class="c">导出</span> PNG</div>
<svg class="a" style="left:1021px;top:136px;" width="8" height="5" viewBox="0 0 8 5"><path d="M0 0 H8 L4 5 Z" fill="#222"/></svg>
<div class="a" style="left:1037px;top:64px;width:68px;height:29px;background:#c9d8d8;border:1px solid #b8caca"></div>
<svg class="a" style="left:1041px;top:67px;" width="24" height="24" viewBox="0 0 24 24"><path d="M3 6 L12 2 L21 6 V18 L12 22 L3 18 Z" fill="#e8e8e8" stroke="#888"/><path d="M3 6 L12 10 V22 L3 18 Z" fill="#fff" stroke="#e03010" stroke-width="2.5"/></svg>
<div class="a" style="left:1069px;top:73.5px;font-size:11px;color:#111;"><span class="c">面的边</span></div>
<svg class="a" style="left:1039px;top:97px;" width="24" height="24" viewBox="0 0 24 24"><path d="M2 6 L12 2 L22 6 V18 L12 22 L2 18 Z" fill="#8a98e4" stroke="#4a58c8"/><path d="M2 6 L22 18 M12 2 L12 22 M22 6 L2 18" stroke="#c8d0f4" stroke-width="0.8"/></svg>
<div class="a" style="left:1067px;top:102.5px;font-size:11px;color:#222;"><span class="c">小平面的边</span></div>
<svg class="a" style="left:1039px;top:127px;" width="24" height="24" viewBox="0 0 24 24"><rect x="2" y="1" width="11" height="13" fill="#f4f4f4" stroke="#8080b0"/><path d="M4 5 H11 M4 9 H11" stroke="#8080b0"/><path d="M6 16 L14 10 L23 15 L15 22 Z" fill="#f8d8d8" stroke="#d05050"/><path d="M6 16 L23 15 M14 10 L15 22" stroke="#d05050"/></svg>
<div class="a" style="left:1067px;top:132.5px;font-size:11px;color:#222;"><span class="c">小平面设置</span></div>
<div class="a" style="left:1135px;top:67px;width:53px;height:49px;background:#fff;border:1px solid #eef0f0;border-radius:3px"></div>
<svg class="a" style="left:1150px;top:79px;" width="24" height="22" viewBox="0 0 24 22"><rect x="2" y="6" width="20" height="13" rx="2" fill="#8ab4c0" stroke="#4a7a88"/><circle cx="10" cy="12" r="4.5" fill="#cfe4ea" stroke="#4a7a88"/><rect x="14" y="3" width="6" height="4" fill="#6a9aa8"/></svg>
<div class="a" style="left:1150px;top:121.5px;font-size:11px;color:#222;"><span class="c">更多</span></div>
<svg class="a" style="left:1157px;top:140px;" width="8" height="5" viewBox="0 0 8 5"><path d="M0 0 H8 L4 5 Z" fill="#222"/></svg>
<div class="a" style="left:1033px;top:159.5px;font-size:11px;color:#3d88b8;"><span class="c">可视化</span></div>
<svg class="a" style="left:1177px;top:163px;" width="8" height="5" viewBox="0 0 8 5"><path d="M0 0 H8 L4 5 Z" fill="#222"/></svg>
<div class="a" style="left:1193px;top:67px;width:1px;height:103px;background:#e2e6e6"></div>
<svg class="a" style="left:1195px;top:163px;" width="8" height="5" viewBox="0 0 8 5"><path d="M0 0 H8 L4 5 Z" fill="#222"/></svg>
<svg class="a" style="left:17px;top:189px;" width="26" height="24" viewBox="0 0 26 24"><rect x="1" y="3" width="22" height="4" fill="#6a88e0"/><path d="M3 1 H21 M4 11 H14 M4 15 H14 M4 19 H14" stroke="#777" stroke-width="1.5"/><path d="M14 8 V21 L17 18 L20 23 L22 22 L19 17 L23 17 Z" fill="#eee" stroke="#555"/></svg>
<div class="a" style="left:46px;top:192.5px;font-size:11px;color:#222;"><span class="c">菜单</span>(M)</div>
<svg class="a" style="left:90px;top:197px;" width="8" height="5" viewBox="0 0 8 5"><path d="M0 0 H8 L4 5 Z" fill="#222"/></svg>
<div class="a" style="left:102px;top:179px;width:1px;height:40px;background:#e2e2e2"></div>
<div class="a" style="left:115px;top:189px;width:133px;height:20px;background:#fff;border:1px solid #a8a8a8"></div>
<svg class="a" style="left:232px;top:197px;" width="9" height="5" viewBox="0 0 9 5"><path d="M0 0 H9 L4.5 5 Z" fill="#a8a8a8"/></svg>
<div class="a" style="left:257px;top:189px;width:140px;height:20px;background:#fff;border:1px solid #a8a8a8"></div>
<div class="a" style="left:260px;top:193.5px;font-size:11px;color:#222;"><span class="c">整个装配</span></div>
<svg class="a" style="left:383px;top:197px;" width="9" height="5" viewBox="0 0 9 5"><path d="M0 0 H9 L4.5 5 Z" fill="#111"/></svg>
<svg class="a" style="left:405px;top:187px;" width="26" height="26" viewBox="0 0 26 26"><path d="M2 4 L10 2 V20 L2 22 Z M2 13 H10 M6 3 V21" fill="none" stroke="#bbb" stroke-width="1.3"/><circle cx="16" cy="9" r="4" fill="none" stroke="#bbb" stroke-width="2"/><circle cx="18" cy="15" r="4" fill="none" stroke="#bbb" stroke-width="2"/></svg>
<svg class="a" style="left:438px;top:187px;" width="26" height="26" viewBox="0 0 26 26"><path d="M3 10 Q3 4 11 5 L14 2 L15 9 L9 10 L11 7 Q6 7 7 12" fill="#ccc"/><path d="M12 14 H22 L18 18 V23 L16 22 V18 Z" fill="#e0e0e0" stroke="#bbb"/></svg>
<svg class="a" style="left:469px;top:187px;" width="26" height="26" viewBox="0 0 26 26"><rect x="1" y="1" width="21" height="21" fill="#fff" stroke="#b04040"/><path d="M7 2 V12 M2 7 H12" stroke="#222"/><circle cx="7" cy="7" r="2.5" fill="none" stroke="#d02020"/><path d="M10 12 H21 L17 16 V21 L14 20 V16 Z" fill="#f0c040" stroke="#b08010"/></svg>
<svg class="a" style="left:513px;top:187px;" width="26" height="26" viewBox="0 0 26 26"><path d="M3 9 Q5 1 13 5" fill="none" stroke="#2a3aa8" stroke-width="2.2"/><path d="M1 4 L5 11 L8 5 Z" fill="#2a3aa8"/><circle cx="15" cy="15" r="6" fill="none" stroke="#d02020" stroke-width="1.5"/><path d="M15 6 V24 M6 15 H24" stroke="#222"/></svg>
<svg class="a" style="left:545px;top:187px;" width="26" height="26" viewBox="0 0 26 26"><circle cx="5" cy="5" r="3" fill="none" stroke="#bbb" stroke-width="2"/><circle cx="11" cy="6" r="3" fill="none" stroke="#bbb" stroke-width="2"/><rect x="11" y="12" width="5" height="5" fill="none" stroke="#ccc"/><rect x="16" y="17" width="5" height="5" fill="none" stroke="#ccc"/></svg>
<svg class="a" style="left:580px;top:187px;" width="26" height="26" viewBox="0 0 26 26"><rect x="2" y="3" width="19" height="16" fill="none" stroke="#999" stroke-dasharray="2 2"/><circle cx="2" cy="3" r="1.8" fill="#bbb"/><circle cx="21" cy="19" r="1.8" fill="#bbb"/></svg>
<svg class="a" style="left:622px;top:187px;" width="26" height="26" viewBox="0 0 26 26"><path d="M2 14 Q4 6 14 3 L24 7 L24 15 L14 20 Q6 22 2 14 Z" fill="#e4e4e4" stroke="#777"/><path d="M14 3 L14 12 L24 15 M14 12 L4 18" fill="none" stroke="#777"/><path d="M7 9 L13 7" stroke="#e03030" stroke-width="1.5"/></svg>
<svg class="a" style="left:497px;top:197px;" width="8" height="5" viewBox="0 0 8 5"><path d="M0 0 H8 L4 5 Z" fill="#222"/></svg>
<svg class="a" style="left:609px;top:197px;" width="8" height="5" viewBox="0 0 8 5"><path d="M0 0 H8 L4 5 Z" fill="#222"/></svg>
<div class="a" style="left:654px;top:184px;width:30px;height:29px;background:#c9d6d6;border:1px solid #b4c6c6"></div>
<div class="a" style="left:686px;top:184px;width:31px;height:29px;background:#c9d6d6;border:1px solid #b4c6c6"></div>
<div class="a" style="left:720px;top:184px;width:31px;height:29px;background:#c9d6d6;border:1px solid #b4c6c6"></div>
<div class="a" style="left:752px;top:184px;width:31px;height:29px;background:#c9d6d6;border:1px solid #b4c6c6"></div>
<div class="a" style="left:852px;top:184px;width:31px;height:29px;background:#c9d6d6;border:1px solid #b4c6c6"></div>
<div class="a" style="left:918px;top:177px;width:24px;height:22px;background:#c9d6d6;border:1px solid #b4c6c6"></div>
<svg class="a" style="left:657px;top:186px;" width="26" height="26" viewBox="0 0 26 26"><path d="M3 8 L13 3 L23 8 V19 L13 24 L3 19 Z" fill="#5a8ae8" stroke="#2a4ab0"/><path d="M3 8 L13 13 L23 8 M13 13 V24" fill="none" stroke="#a8c8ff"/><path d="M8 4 V16 L22 20" fill="none" stroke="#e02020" stroke-width="1.3"/></svg>
<svg class="a" style="left:689px;top:186px;" width="26" height="26" viewBox="0 0 26 26"><path d="M1 2 L7 7 L1 11 Z" fill="#30b040"/><path d="M1 14 L7 18 L1 23 Z" fill="#e02020"/><path d="M16 5 L23 12 L16 19 L9 12 Z" fill="#fff" stroke="#222"/><circle cx="16" cy="12" r="2.5" fill="#f0e020"/><path d="M16 1 V6 M16 18 V23 M8 12 H11 M21 12 H25" stroke="#222" stroke-width="1.5"/></svg>
<svg class="a" style="left:723px;top:186px;" width="26" height="26" viewBox="0 0 26 26"><path d="M3 23 L22 4" stroke="#222" stroke-width="1.3"/><circle cx="22" cy="4" r="2.5" fill="#d02020"/></svg>
<svg class="a" style="left:755px;top:186px;" width="26" height="26" viewBox="0 0 26 26"><path d="M3 23 L23 3" stroke="#222" stroke-width="1.3"/><circle cx="13" cy="13" r="2.5" fill="#d02020"/></svg>
<svg class="a" style="left:789px;top:186px;" width="26" height="26" viewBox="0 0 26 26"><path d="M2 3 Q8 1 10 9 Q12 20 22 21" fill="none" stroke="#222" stroke-width="1.3"/><circle cx="10" cy="11" r="2.2" fill="#d02020"/></svg>
<svg class="a" style="left:822px;top:186px;" width="26" height="26" viewBox="0 0 26 26"><path d="M1 18 Q12 4 23 18 M12 2 V24" fill="none" stroke="#222" stroke-width="1.3"/><circle cx="12" cy="10" r="2.2" fill="#d02020"/></svg>
<svg class="a" style="left:855px;top:186px;" width="26" height="26" viewBox="0 0 26 26"><circle cx="13" cy="13" r="10" fill="none" stroke="#111" stroke-width="1.5"/><path d="M13 9 L14 12 L17 13 L14 14 L13 17 L12 14 L9 13 L12 12 Z" fill="#d02020"/></svg>
<svg class="a" style="left:887px;top:186px;" width="26" height="26" viewBox="0 0 26 26"><circle cx="12" cy="13" r="10" fill="none" stroke="#222" stroke-width="1.3"/><circle cx="12" cy="3" r="2" fill="#d02020"/><circle cx="12" cy="23" r="2" fill="#d02020"/><circle cx="2" cy="13" r="2" fill="#d02020"/><circle cx="22" cy="13" r="2" fill="#d02020"/></svg>
<svg class="a" style="left:920px;top:179px;" width="20" height="18" viewBox="0 0 20 18"><path d="M10 2 V16 M3 9 H17" stroke="#111" stroke-width="1.5"/><circle cx="10" cy="9" r="1.5" fill="#d02020"/></svg>
<svg class="a" style="left:945px;top:179px;" width="18" height="18" viewBox="0 0 18 18"><path d="M2 8 Q6 2 14 4 L13 14 Q8 10 4 16 Z" fill="#a8c8f0" stroke="#5a7ab0"/><circle cx="9" cy="8" r="2" fill="#d02020"/></svg>
<svg class="a" style="left:920px;top:202px;" width="18" height="16" viewBox="0 0 18 16"><path d="M2 15 L16 2" stroke="#222"/><circle cx="9" cy="8.5" r="2" fill="#d02020"/></svg>
<svg class="a" style="left:948px;top:202px;" width="15" height="16" viewBox="0 0 15 16"><path d="M2 3 L12 1 V14 L2 15 Z M2 7 H12 M2 11 H12 M5 2 V15 M9 1 V14" fill="none" stroke="#333"/><circle cx="8" cy="7" r="1.5" fill="#d02020"/></svg>
<div class="a" style="left:973px;top:180px;width:1px;height:38px;background:#e2e2e2"></div>
<svg class="a" style="left:984px;top:187px;" width="24" height="24" viewBox="0 0 24 24"><rect x="1" y="2" width="21" height="19" fill="#eef2f8" stroke="#3040b0" stroke-dasharray="2 1"/><rect x="1" y="2" width="21" height="3" fill="#5a6ac8"/><circle cx="11" cy="12" r="6" fill="#fff" stroke="#555" stroke-width="1.5"/><path d="M15 16 L21 22" stroke="#555" stroke-width="2"/><circle cx="22" cy="3" r="2" fill="#d02020"/><circle cx="1" cy="21" r="2" fill="#d02020"/></svg>
<svg class="a" style="left:1017px;top:187px;" width="24" height="24" viewBox="0 0 24 24"><rect x="1" y="2" width="22" height="18" fill="#dde4f4" stroke="#a0a8c8"/><path d="M10 22 Q8 13 12 11 L17 9 L22 13 L20 22 Z" fill="#f4d8a8" stroke="#c09050"/></svg>
<svg class="a" style="left:1050px;top:187px;" width="24" height="24" viewBox="0 0 24 24"><path d="M4 12 A8 8 0 0 1 18 6" fill="none" stroke="#4a5ac8" stroke-width="2.5"/><path d="M19 11 A8 8 0 0 1 5 17" fill="none" stroke="#4a5ac8" stroke-width="2.5"/><path d="M15 2 L21 4 L17 9 Z M8 21 L2 19 L6 14 Z" fill="#4a5ac8"/></svg>
<svg class="a" style="left:1085px;top:180px;" width="16" height="15" viewBox="0 0 16 15"><rect x="1" y="1" width="14" height="13" fill="#dfe6f8" stroke="#4a5ab8"/><rect x="1" y="1" width="14" height="3" fill="#4a5ab8"/><path d="M4 7 L6 9 M12 7 L10 9 M4 12 L6 10 M12 12 L10 10" stroke="#e04020"/></svg>
<svg class="a" style="left:1107px;top:185px;" width="8" height="5" viewBox="0 0 8 5"><path d="M0 0 H8 L4 5 Z" fill="#222"/></svg>
<svg class="a" style="left:1120px;top:180px;" width="16" height="16" viewBox="0 0 16 16"><path d="M1 5 L8 1 L15 5 L8 9 Z" fill="#c0c8f0" stroke="#4a58c8"/><path d="M1 5 L8 9 V15 L1 12 Z" fill="#8a96e8" stroke="#4a58c8"/><path d="M8 9 L15 5 V12 L8 15 Z" fill="#5a68d0" stroke="#4a58c8"/></svg>
<svg class="a" style="left:1143px;top:185px;" width="8" height="5" viewBox="0 0 8 5"><path d="M0 0 H8 L4 5 Z" fill="#222"/></svg>
<svg class="a" style="left:1084px;top:202px;" width="18" height="15" viewBox="0 0 18 15"><path d="M2 9 L10 3 L16 6 L10 12 Z" fill="#777" stroke="#444"/><path d="M2 9 L10 12 V14 L2 11 Z" fill="#aaa"/></svg>
<svg class="a" style="left:1107px;top:207px;" width="8" height="5" viewBox="0 0 8 5"><path d="M0 0 H8 L4 5 Z" fill="#222"/></svg>
<svg class="a" style="left:1120px;top:202px;" width="18" height="15" viewBox="0 0 18 15"><path d="M1 2 L5 5 L1 8 Z" fill="#30b040"/><path d="M1 8 L5 11 L1 14 Z" fill="#d03020"/><path d="M11 3 L17 8 L11 13 L5 8 Z" fill="#c8d4f4" stroke="#7080c8"/><path d="M11 5 L14 8 L11 11 Z" fill="#4a5ac0"/></svg>
<svg class="a" style="left:1143px;top:207px;" width="8" height="5" viewBox="0 0 8 5"><path d="M0 0 H8 L4 5 Z" fill="#222"/></svg>
<div class="a" style="left:1159px;top:180px;width:1px;height:38px;background:#e2e2e2"></div>
<svg class="a" style="left:1195px;top:210px;" width="8" height="5" viewBox="0 0 8 5"><path d="M0 0 H8 L4 5 Z" fill="#222"/></svg>
<script>
(function(){try{var s=document.createElement('span');s.style.cssText='position:absolute;left:-9999px;top:0;font-size:100px;line-height:1;white-space:nowrap;font-family:"Liberation Sans",sans-serif';s.textContent='中文';document.body.appendChild(s);var w=s.getBoundingClientRect().width;document.body.removeChild(s);if(w>170){var st=document.createElement('style');st.textContent='.c{font-size:1em!important;letter-spacing:0!important}';document.head.appendChild(st);}}catch(e){}})();
</script>
</body></html>
